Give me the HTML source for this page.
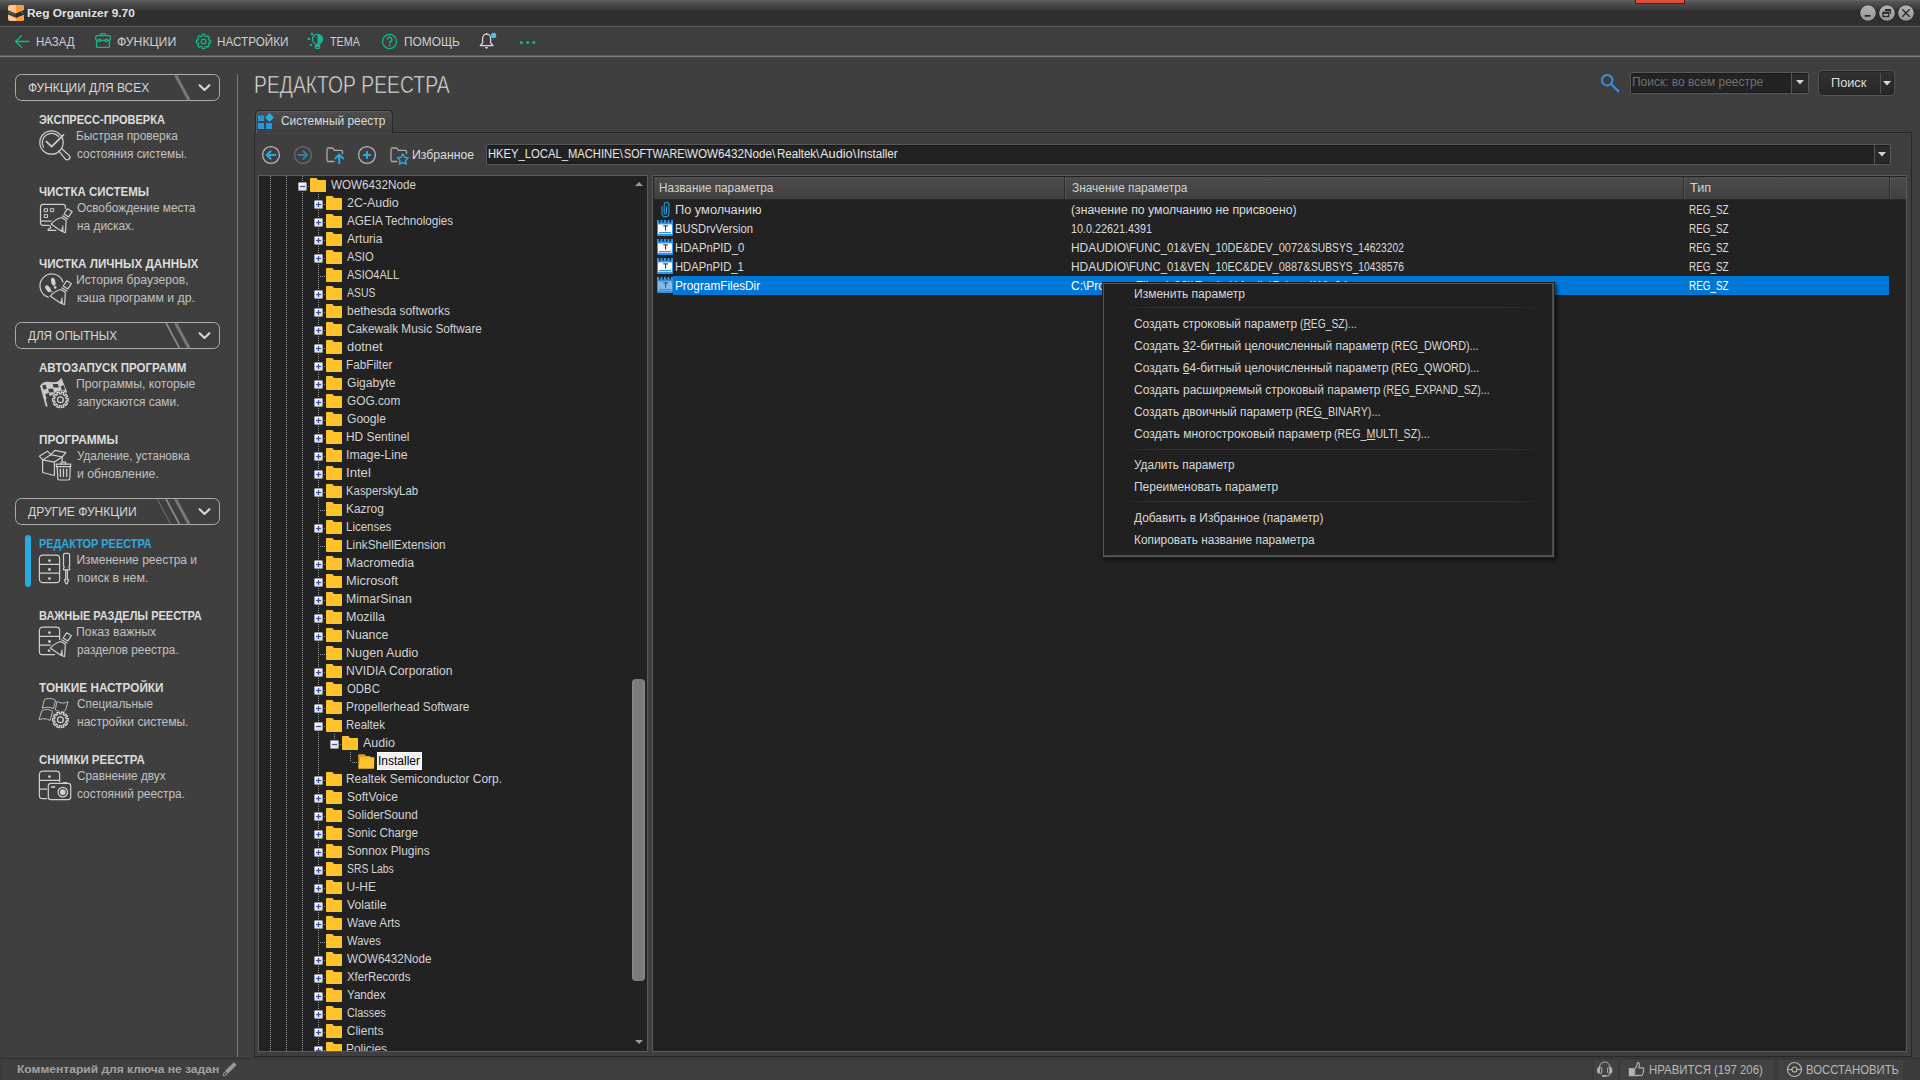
<!DOCTYPE html>
<html lang="ru"><head><meta charset="utf-8"><title>Reg Organizer 9.70</title>
<style>
html,body{margin:0;padding:0;background:#3f3f3f;}
body{width:1920px;height:1080px;overflow:hidden;font-family:"Liberation Sans",sans-serif;}
#app{position:relative;width:1920px;height:1080px;overflow:hidden;background:#3f3f3f;}
.t{position:absolute;white-space:nowrap;line-height:1;display:block;}
.t u{text-decoration:underline;text-underline-offset:1px;}
svg{position:absolute;overflow:visible;}
.vd{position:absolute;width:1px;background:repeating-linear-gradient(#9a9a9a 0,#9a9a9a 1px,transparent 1px,transparent 2px);}
.hd{position:absolute;height:1px;background:repeating-linear-gradient(90deg,#9a9a9a 0,#9a9a9a 1px,transparent 1px,transparent 2px);}
.s{display:inline-block;transform-origin:0 50%;white-space:nowrap;vertical-align:baseline;}

</style></head>
<body>
<div id="app">
<div style="position:absolute;left:0px;top:0px;width:1920px;height:26px;background:linear-gradient(#6a6a6a 0,#585858 1px,#4f4f4f 3px,#464646 6px,#3c3c3c 9px,#303030 10.5px,#303030 26px);"></div>
<div style="position:absolute;left:0px;top:26px;width:1920px;height:1px;background:#585858;"></div>
<div style="position:absolute;left:1635px;top:0px;width:50px;height:4px;background:#dc4f3f;box-sizing:border-box;border:1px solid #5a1a14;border-top:0;"></div>
<svg style="left:8px;top:5px" width="16" height="16" viewBox="0 0 16 16">
<rect x="0" y="0" width="16" height="16" rx="2.2" fill="#ffc590"/>
<path d="M8 0h5.8a2.2 2.2 0 0 1 2.2 2.2v11.6a2.2 2.2 0 0 1-2.2 2.2H8z" fill="#ff9a3c"/>
<path d="M0 5.2l8 3.2 8-3.2v4.2l-8 3.4-8-3.4z" fill="#3a3a3a"/>
<path d="M8 8.4l8-3.2v4.2l-8 3.4z" fill="#2b2b2b"/>
<rect x="1.2" y="6.9" width="1.5" height="1.3" fill="#19b38a"/><rect x="4" y="8" width="1.4" height="1.3" fill="#e74c3c"/>
<rect x="13.6" y="6.9" width="1.4" height="1.3" fill="#29abe2"/>
</svg>
<span class="t " style="left:26.97px;top:8px;font-size:11.5px;color:#e2e2e2;transform-origin:0 9px;transform:scaleX(1.0350);font-weight:700;">Reg Organizer 9.70</span>
<svg style="left:1859px;top:4px" width="18" height="18" viewBox="0 0 18 18"><defs><linearGradient id="wbmin" x1="0" y1="0" x2="0" y2="1"><stop offset="0" stop-color="#b4b4b4"/><stop offset="1" stop-color="#969696"/></linearGradient></defs><circle cx="9" cy="9" r="8.6" fill="#262626"/><circle cx="9" cy="9" r="7.8" fill="url(#wbmin)"/><rect x="5.5" y="11" width="6" height="1.7" fill="#2a2a2a"/></svg>
<svg style="left:1878px;top:4px" width="18" height="18" viewBox="0 0 18 18"><defs><linearGradient id="wbmax" x1="0" y1="0" x2="0" y2="1"><stop offset="0" stop-color="#b4b4b4"/><stop offset="1" stop-color="#969696"/></linearGradient></defs><circle cx="9" cy="9" r="8.6" fill="#262626"/><circle cx="9" cy="9" r="7.8" fill="url(#wbmax)"/><path d="M7 5.6h5.4v4.2M7 6.4h5.4" stroke="#2a2a2a" stroke-width="1.3" fill="none"/><rect x="5" y="8.3" width="5.6" height="4.2" fill="none" stroke="#2a2a2a" stroke-width="1.3"/><path d="M5 9h5.6" stroke="#2a2a2a" stroke-width="1.6"/></svg>
<svg style="left:1897px;top:4px" width="18" height="18" viewBox="0 0 18 18"><defs><linearGradient id="wbcls" x1="0" y1="0" x2="0" y2="1"><stop offset="0" stop-color="#b4b4b4"/><stop offset="1" stop-color="#969696"/></linearGradient></defs><circle cx="9" cy="9" r="8.6" fill="#262626"/><circle cx="9" cy="9" r="7.8" fill="url(#wbcls)"/><path d="M5.3 5.3l7.4 7.4M12.7 5.3l-7.4 7.4" stroke="#2a2a2a" stroke-width="1.4" fill="none"/></svg>
<div style="position:absolute;left:0px;top:27px;width:1920px;height:28px;background:#3e3e3e;"></div>
<div style="position:absolute;left:0px;top:55px;width:1920px;height:1px;background:#5c5c5c;"></div>
<div style="position:absolute;left:0px;top:56px;width:1920px;height:1px;background:#7d7d7d;"></div>
<div style="position:absolute;left:0px;top:57px;width:1920px;height:1px;background:#4a4a4a;"></div>
<svg style="left:14px;top:34px" width="16" height="15" viewBox="0 0 16 15"><path d="M15 7.5H1.6M7.6 1.6L1.6 7.5l6 5.9" fill="none" stroke="#19b58b" stroke-width="1.3" stroke-linecap="round" stroke-linejoin="round"/></svg>
<span class="t " style="left:35.61px;top:35px;font-size:13px;color:#cfcfcf;transform-origin:0 11px;transform:scaleX(0.8824);">НАЗАД</span>
<svg style="left:95px;top:33px" width="16" height="16" viewBox="0 0 16 16"><g fill="none" stroke="#19b58b" stroke-width="1.3" stroke-linejoin="round"><path d="M5.700 2.600V1.500a.9.9 0 0 1 .9-.9h3a.9.9 0 0 1 .9.900v1.100"/><path d="M2.900 7.400H2A1.300 1.300 0 0 1 .7 6.100V3.900A1.300 1.300 0 0 1 2 2.600h12.100a1.300 1.300 0 0 1 1.300 1.300v2.200a1.300 1.300 0 0 1-1.300 1.300H13"/><path d="M1.600 7.400v5.800a1.200 1.200 0 0 0 1.200 1.200h10.500a1.200 1.200 0 0 0 1.200-1.200V7.400"/><circle cx="4.400" cy="7.400" r="1.200"/><circle cx="11.500" cy="7.400" r="1.200"/><path d="M5.600 7.400h4.700"/></g></svg>
<span class="t " style="left:116.51px;top:35px;font-size:13px;color:#cfcfcf;transform-origin:0 11px;transform:scaleX(0.9426);">ФУНКЦИИ</span>
<svg style="left:195px;top:33px" width="17" height="17" viewBox="0 0 17 17"><path d="M15.58 7.20L15.58 9.80L13.84 9.83L13.21 11.33L14.43 12.59L12.59 14.43L11.33 13.21L9.83 13.84L9.80 15.58L7.20 15.58L7.17 13.84L5.67 13.21L4.41 14.43L2.57 12.59L3.79 11.33L3.16 9.83L1.42 9.80L1.42 7.20L3.16 7.17L3.79 5.67L2.57 4.41L4.41 2.57L5.67 3.79L7.17 3.16L7.20 1.42L9.80 1.42L9.83 3.16L11.33 3.79L12.59 2.57L14.43 4.41L13.21 5.67L13.84 7.17Z" fill="none" stroke="#19b58b" stroke-width="1.2" stroke-linejoin="round"/><circle cx="8.5" cy="8.5" r="2.3" fill="none" stroke="#19b58b" stroke-width="1.2"/></svg>
<span class="t " style="left:217.01px;top:35px;font-size:13px;color:#cfcfcf;transform-origin:0 11px;transform:scaleX(0.8984);">НАСТРОЙКИ</span>
<svg style="left:307px;top:32px" width="18" height="18" viewBox="0 0 18 18"><circle cx="10.450" cy="7.300" r="5" fill="none" stroke="#19b58b" stroke-width="1.300"/><path d="M10.450 2.300a5 5 0 0 1 0 10z" fill="#19b58b"/><path d="M7.900 12.200h5.200v3.300a1.500 1.500 0 0 1-1.500 1.500H9.400a1.500 1.500 0 0 1-1.500-1.500z" fill="#19b58b"/><ellipse cx="10.500" cy="15.500" rx="1.500" ry=".55" fill="#3e3e3e"/><rect x="3.900" y=".8" width="2.200" height="2.200" rx=".4" fill="#19b58b"/><rect x=".8" y="5.850" width="2.200" height="2.200" rx=".4" fill="#19b58b"/><rect x="2.850" y="11.900" width="2.200" height="2.200" rx=".4" fill="#19b58b"/></svg>
<span class="t " style="left:330.39px;top:35px;font-size:13px;color:#cfcfcf;transform-origin:0 11px;transform:scaleX(0.8278);">ТЕМА</span>
<svg style="left:381px;top:33px" width="17" height="17" viewBox="0 0 17 17"><circle cx="8.500" cy="8.500" r="7.050" fill="none" stroke="#19b58b" stroke-width="1.300"/><path d="M6.300 6.600a2.300 2.300 0 1 1 3.500 1.900c-.8.500-1.200.9-1.200 1.900" fill="none" stroke="#19b58b" stroke-width="1.650"/><circle cx="8.600" cy="12.500" r=".9" fill="#19b58b"/></svg>
<span class="t " style="left:403.50px;top:35px;font-size:13px;color:#cfcfcf;transform-origin:0 11px;transform:scaleX(0.9143);">ПОМОЩЬ</span>
<svg style="left:479px;top:32px" width="18" height="18" viewBox="0 0 18 18"><path d="M1.200 13.600L3.600 11V6.400a4 4.300 0 0 1 8 0V11l2.400 2.600z" fill="none" stroke="#dadada" stroke-width="1.250" stroke-linejoin="round"/><path d="M7.600 2.100V.9" stroke="#dadada" stroke-width="1.200"/><path d="M5.900 15h3.200l-1.600 2.200z" fill="#dadada"/><circle cx="14.600" cy="3.500" r="2.650" fill="#40c4fc"/></svg>
<svg style="left:519px;top:40px" width="18" height="5" viewBox="0 0 18 5"><circle cx="2.400" cy="2.400" r="1.500" fill="#19b58b"/><circle cx="8.600" cy="2.400" r="1.500" fill="#19b58b"/><circle cx="14.800" cy="2.400" r="1.500" fill="#19b58b"/></svg>
<div style="position:absolute;left:0px;top:1057px;width:1920px;height:23px;background:#3b3b3b;"></div>
<div style="position:absolute;left:0px;top:1058px;width:1920px;height:1px;background:#343434;"></div>
<div style="position:absolute;left:2px;top:1060px;width:1590px;height:20px;background:#3f3f3f;"></div>
<span class="t " style="left:16.87px;top:1064px;font-size:11.5px;color:#a2a2a2;transform-origin:0 9px;transform:scaleX(1.0467);font-weight:700;">Комментарий для ключа не задан</span>
<svg style="left:222px;top:1061px" width="16" height="16" viewBox="0 0 16 16"><path d="M11.800 1.200l2.800 2.800-8.800 8.800-2.800-2.800z" fill="#9a9a9a"/><path d="M2.300 10.900l2.700 2.700-3.900 1.300z" fill="none" stroke="#9a9a9a" stroke-width="1"/></svg>
<div style="position:absolute;left:1594px;top:1060px;width:24px;height:20px;background:#424242;"></div>
<svg style="left:1597px;top:1061px" width="17" height="17" viewBox="0 0 17 17"><path d="M2.300 7V6.700a5.400 5.700 0 0 1 10.800 0V7" fill="none" stroke="#b4b4b4" stroke-width="1"/><path d="M2.400 5.900C.9 6.100 0 7.500 0 9.400s.9 3.300 2.400 3.500z" fill="#b4b4b4"/><ellipse cx="3.700" cy="9.400" rx="1.200" ry="3.500" fill="none" stroke="#b4b4b4" stroke-width="1"/><path d="M13 5.900c1.500.2 2.400 1.600 2.400 3.500s-.9 3.300-2.400 3.500z" fill="#b4b4b4"/><ellipse cx="11.700" cy="9.400" rx="1.200" ry="3.500" fill="none" stroke="#b4b4b4" stroke-width="1"/><path d="M13.200 12.600c0 1.700-1.400 2.400-3.500 2.400" fill="none" stroke="#b4b4b4" stroke-width="1"/><rect x="4.900" y="14" width="4.900" height="1.800" rx=".9" fill="#b4b4b4"/></svg>
<div style="position:absolute;left:1621px;top:1060px;width:153px;height:20px;background:#424242;"></div>
<svg style="left:1628px;top:1061px" width="17" height="16" viewBox="0 0 17 16"><rect x=".750" y="7.100" width="5.200" height="8.100" fill="#b4b4b4"/><path d="M6.700 14.600V7.900c1.700-1.200 2.400-3.100 2.600-5.700.1-1 1.700-.8 2 .7.200 1.200-.1 2.600-.5 3.900h3.700c1.200 0 1.500 1.200 1 2 .5.700.3 1.500-.3 2 .3.700 0 1.400-.5 1.800.1.900-.5 1.800-1.500 1.800z" fill="none" stroke="#b4b4b4" stroke-width="1.150" stroke-linejoin="round"/></svg>
<span class="t " style="left:1649.32px;top:1063px;font-size:13px;color:#b9b9b9;transform-origin:0 11px;transform:scaleX(0.8766);">НРАВИТСЯ (197 206)</span>
<div style="position:absolute;left:1778px;top:1060px;width:125px;height:20px;background:#424242;"></div>
<svg style="left:1786px;top:1061px" width="17" height="17" viewBox="0 0 17 17"><circle cx="8.500" cy="8.500" r="7" fill="none" stroke="#b4b4b4" stroke-width="1.200"/><circle cx="8.500" cy="8.500" r="2.500" fill="none" stroke="#b4b4b4" stroke-width="1.200"/><path d="M1.500 8.500H6M11 8.500h4.500" stroke="#b4b4b4" stroke-width="1.200"/></svg>
<span class="t " style="left:1805.82px;top:1063px;font-size:13px;color:#b9b9b9;transform-origin:0 11px;transform:scaleX(0.8703);">ВОССТАНОВИТЬ</span>
<div style="position:absolute;left:237px;top:74px;width:1px;height:983px;background:#7a7a7a;"></div>
<div style="position:absolute;left:15px;top:74px;width:205px;height:27px;box-sizing:border-box;border:1px solid #adadad;border-radius:6.5px;"></div>
<span class="t " style="left:27.61px;top:82px;font-size:12.5px;color:#d8d8d8;transform-origin:0 10px;transform:scaleX(0.9562);">ФУНКЦИИ ДЛЯ ВСЕХ</span>
<svg style="left:15px;top:74px" width="205" height="27" viewBox="0 0 205 27"><path d="M160.6 1L173.9 26" stroke="#787878" stroke-width="3"/><path d="M184.600 11.200l4.900 4.800 4.900-4.800" fill="none" stroke="#d6d6d6" stroke-width="2.100" stroke-linecap="round" stroke-linejoin="round"/></svg>
<div style="position:absolute;left:15px;top:322px;width:205px;height:27px;box-sizing:border-box;border:1px solid #adadad;border-radius:6.5px;"></div>
<span class="t " style="left:28.00px;top:330px;font-size:12.5px;color:#d8d8d8;transform-origin:0 10px;transform:scaleX(0.9361);">ДЛЯ ОПЫТНЫХ</span>
<svg style="left:15px;top:322px" width="205" height="27" viewBox="0 0 205 27"><path d="M160.6 1L173.9 26" stroke="#787878" stroke-width="3"/><path d="M151.05 1L164.35 26" stroke="#8a8a8a" stroke-width="1.7"/><path d="M184.600 11.200l4.900 4.800 4.900-4.800" fill="none" stroke="#d6d6d6" stroke-width="2.100" stroke-linecap="round" stroke-linejoin="round"/></svg>
<div style="position:absolute;left:15px;top:498px;width:205px;height:27px;box-sizing:border-box;border:1px solid #adadad;border-radius:6.5px;"></div>
<span class="t " style="left:28.00px;top:506px;font-size:12.5px;color:#d8d8d8;transform-origin:0 10px;transform:scaleX(0.9659);">ДРУГИЕ ФУНКЦИИ</span>
<svg style="left:15px;top:498px" width="205" height="27" viewBox="0 0 205 27"><path d="M160.6 1L173.9 26" stroke="#787878" stroke-width="3"/><path d="M151.05 1L164.35 26" stroke="#8a8a8a" stroke-width="1.7"/><path d="M142.3 1L155.6 26" stroke="#757575" stroke-width="1"/><path d="M184.600 11.200l4.900 4.800 4.900-4.800" fill="none" stroke="#d6d6d6" stroke-width="2.100" stroke-linecap="round" stroke-linejoin="round"/></svg>
<span class="t " style="left:38.88px;top:114px;font-size:12.2px;color:#dcdcdc;transform-origin:0 10px;transform:scaleX(0.9061);font-weight:700;font-weight:700;">ЭКСПРЕСС-ПРОВЕРКА</span><span class="t " style="left:76.46px;top:130px;font-size:12px;color:#c2c2c2;transform-origin:0 10px;transform:scaleX(0.9902);">Быстрая проверка</span><span class="t " style="left:76.73px;top:148px;font-size:12px;color:#c2c2c2;transform-origin:0 10px;transform:scaleX(0.9864);">состояния системы.</span>
<svg style="left:38px;top:128px" width="36" height="36" viewBox="0 0 36 36" fill="none" stroke="#cfcfcf" stroke-width="1.200" stroke-linejoin="round" stroke-linecap="round"><circle cx="13.500" cy="14.500" r="11.700"/><path d="M5.500 19.200A9.300 9.300 0 0 1 20.600 8.500"/><path d="M8.500 13.600l5.100 5.100L25.500 6.800" stroke-width="1.700"/><path d="M23.300 20.300L31.300 27.600a2.600 2.600 0 0 1-4.100 3.200L20.700 22.900"/></svg>
<span class="t " style="left:38.74px;top:186px;font-size:12.2px;color:#dcdcdc;transform-origin:0 10px;transform:scaleX(0.9437);font-weight:700;font-weight:700;">ЧИСТКА СИСТЕМЫ</span><span class="t " style="left:76.73px;top:202px;font-size:12px;color:#c2c2c2;transform-origin:0 10px;transform:scaleX(0.9895);">Освобождение места</span><span class="t " style="left:76.59px;top:220px;font-size:12px;color:#c2c2c2;transform-origin:0 10px;transform:scaleX(0.9911);">на дисках.</span>
<svg style="left:38px;top:200px" width="36" height="36" viewBox="0 0 36 36" fill="none" stroke="#cfcfcf" stroke-width="1.200" stroke-linejoin="round" stroke-linecap="round"><path d="M12 25.300H5a2.500 2.500 0 0 1-2.500-2.500V6.800A2.500 2.500 0 0 1 5 4.300h19.900a2.500 2.500 0 0 1 2.500 2.500V9"/><path d="M2.500 21.200h11"/><path d="M12.200 25.300l.5 2.900-2.400.8-.2 1.300h7.800"/><g stroke-width="1"><rect x="6.600" y="8.700" width="2.900" height="2.900"/><rect x="12.700" y="8.700" width="2.900" height="2.900"/><rect x="6.600" y="14.600" width="2.900" height="2.900"/></g><g transform="translate(0 0)"><path d="M23.500 17.500C19.500 18.400 15.600 21.200 13.100 24.100L22.700 30.800 27.400 32.700 28.200 20.300z" fill="#3f3f3f" stroke="#3f3f3f" stroke-width="3.400"/><path d="M29.400 8.800L34.100 11.600 30.600 16.900 26 14z" fill="#3f3f3f" stroke="#3f3f3f" stroke-width="3"/><path d="M23.500 17.500C19.500 18.400 15.600 21.200 13.100 24.100L22.700 30.800 27.400 32.700 28.200 20.300z"/><path d="M29.400 8.800L34.100 11.600 30.600 16.900 26 14z"/><path d="M24.500 15.800L29.700 18.900"/><path d="M24.800 25.800L23.200 30.900 25.200 31.600z" fill="#cfcfcf" stroke-width=".5"/></g></svg>
<span class="t " style="left:38.74px;top:258px;font-size:12.2px;color:#dcdcdc;transform-origin:0 10px;transform:scaleX(0.9593);font-weight:700;font-weight:700;">ЧИСТКА ЛИЧНЫХ ДАННЫХ</span><span class="t " style="left:76.44px;top:274px;font-size:12px;color:#c2c2c2;transform-origin:0 10px;transform:scaleX(1.0138);">История браузеров,</span><span class="t " style="left:76.58px;top:292px;font-size:12px;color:#c2c2c2;transform-origin:0 10px;transform:scaleX(1.0198);">кэша программ и др.</span>
<svg style="left:38px;top:272px" width="36" height="36" viewBox="0 0 36 36" fill="none" stroke="#cfcfcf" stroke-width="1.200" stroke-linejoin="round" stroke-linecap="round"><path d="M25 10A11.800 11.800 0 1 0 10.500 25.100"/><ellipse cx="15.300" cy="9.700" rx="2.100" ry="4" transform="rotate(-14 15.300 9.700)" fill="#cfcfcf" stroke="none"/><circle cx="17.200" cy="15.400" r="1.300" fill="#cfcfcf" stroke="none"/><ellipse cx="10.100" cy="16.700" rx="2.100" ry="3.900" transform="rotate(-36 10.100 16.700)" fill="#cfcfcf" stroke="none"/><circle cx="14.100" cy="20.200" r="1.100" fill="#cfcfcf" stroke="none"/><g transform="translate(-0.8 0)"><path d="M23.500 17.500C19.500 18.400 15.600 21.200 13.100 24.100L22.700 30.800 27.400 32.700 28.200 20.300z" fill="#3f3f3f" stroke="#3f3f3f" stroke-width="3.400"/><path d="M29.400 8.800L34.100 11.600 30.600 16.900 26 14z" fill="#3f3f3f" stroke="#3f3f3f" stroke-width="3"/><path d="M23.500 17.500C19.500 18.400 15.600 21.200 13.100 24.100L22.700 30.800 27.400 32.700 28.200 20.300z"/><path d="M29.400 8.800L34.100 11.600 30.600 16.900 26 14z"/><path d="M24.500 15.800L29.700 18.900"/><path d="M24.800 25.800L23.200 30.900 25.200 31.600z" fill="#cfcfcf" stroke-width=".5"/></g></svg>
<span class="t " style="left:38.87px;top:362px;font-size:12.2px;color:#dcdcdc;transform-origin:0 10px;transform:scaleX(0.9495);font-weight:700;font-weight:700;">АВТОЗАПУСК ПРОГРАММ</span><span class="t " style="left:76.44px;top:378px;font-size:12px;color:#c2c2c2;transform-origin:0 10px;transform:scaleX(1.0172);">Программы, которые</span><span class="t " style="left:76.86px;top:396px;font-size:12px;color:#c2c2c2;transform-origin:0 10px;transform:scaleX(0.9878);">запускаются сами.</span>
<svg style="left:38px;top:376px" width="36" height="36" viewBox="0 0 36 36" fill="none" stroke="#cfcfcf" stroke-width="1.200" stroke-linejoin="round" stroke-linecap="round"><path d="M2 9.700C3.500 8 5 6.500 6.800 6c3.700-.8 7.400.6 11.100 0 2.200-.5 4-2.200 5.600-4.300L29 16c-1.200 1.600-2.600 2.400-4.200 2.800-3.600.800-7.200-.6-10.800.2-2.400.600-4.600 2.200-6.300 4.400l2 6.800-1.800.6z" fill="#c9c9c9" stroke="none"/><path d="M4.200 9.400l3.400-1 1.300 4.300-3.400 1.100z" fill="#3f3f3f" stroke="none"/><path d="M14.600 7.900h5.300l1 3.700h-5.200z" fill="#3f3f3f" stroke="none"/><path d="M10.100 12.900l4.700-.3 1.200 3.700-4.700.2z" fill="#3f3f3f" stroke="none"/><path d="M22.700 10.400l3-1.400 1.400 4.500-3 1.300z" fill="#3f3f3f" stroke="none"/><path d="M7.200 18.200l3.600-1.500 1.100 3.900-3.500 1.700z" fill="#3f3f3f" stroke="none"/><circle cx="22.4" cy="23.8" r="9" fill="#3f3f3f" stroke="none"/><path d="M30.18 22.44L30.18 25.16L28.21 24.81L27.70 26.40L29.49 27.28L27.90 29.47L26.51 28.04L25.16 29.01L26.10 30.78L23.51 31.62L23.23 29.64L21.57 29.64L21.29 31.62L18.70 30.78L19.64 29.01L18.29 28.04L16.90 29.47L15.31 27.28L17.10 26.40L16.59 24.81L14.62 25.16L14.62 22.44L16.59 22.79L17.10 21.20L15.31 20.32L16.90 18.13L18.29 19.56L19.64 18.59L18.70 16.82L21.29 15.98L21.57 17.96L23.23 17.96L23.51 15.98L26.10 16.82L25.16 18.59L26.51 19.56L27.90 18.13L29.49 20.32L27.70 21.20L28.21 22.79Z" stroke-width="1.300"/><circle cx="22.4" cy="23.8" r="2.900" stroke-width="1.300"/></svg>
<span class="t " style="left:38.60px;top:434px;font-size:12.2px;color:#dcdcdc;transform-origin:0 10px;transform:scaleX(0.9743);font-weight:700;font-weight:700;">ПРОГРАММЫ</span><span class="t " style="left:76.87px;top:450px;font-size:12px;color:#c2c2c2;transform-origin:0 10px;transform:scaleX(0.9677);">Удаление, установка</span><span class="t " style="left:76.58px;top:468px;font-size:12px;color:#c2c2c2;transform-origin:0 10px;transform:scaleX(1.0224);">и обновление.</span>
<svg style="left:38px;top:448px" width="36" height="36" viewBox="0 0 36 36" fill="none" stroke="#cfcfcf" stroke-width="1.200" stroke-linejoin="round" stroke-linecap="round"><path d="M4.600 11.900V24.500L16.400 27.500V14.100z"/><path d="M4.600 11.900L12.700 6.700 24.200 9 16.400 14.100"/><path d="M4.600 11.900L1.300 8.200 9.400 3.200 12.700 6.700"/><path d="M12.700 6.700L16.800 2.300 27.900 4.700 24.200 9"/><path d="M24.200 9v4.300"/><path d="M19.200 18.600l.6 11.700a1.700 1.700 0 0 0 1.700 1.700h8.600a1.700 1.700 0 0 0 1.700-1.700l.5-11.700" fill="#3f3f3f"/><rect x="18.300" y="16.200" width="14.400" height="2.400" fill="#3f3f3f"/><path d="M23.100 16.200v-2.100h4.500v2.100"/><path d="M22.400 21.200v7.400M25.500 21.200v7.400M28.700 21.200v7.400" stroke-width="1.300"/></svg>
<span class="t " style="left:38.63px;top:538px;font-size:12.2px;color:#29abe2;transform-origin:0 10px;transform:scaleX(0.8954);font-weight:700;font-weight:700;">РЕДАКТОР РЕЕСТРА</span><span class="t " style="left:76.45px;top:554px;font-size:12px;color:#c2c2c2;transform-origin:0 10px;transform:scaleX(1.0000);">Изменение реестра и</span><span class="t " style="left:76.57px;top:572px;font-size:12px;color:#c2c2c2;transform-origin:0 10px;transform:scaleX(1.0335);">поиск в нем.</span>
<svg style="left:38px;top:552px" width="36" height="36" viewBox="0 0 36 36" fill="none" stroke="#cfcfcf" stroke-width="1.200" stroke-linejoin="round" stroke-linecap="round"><rect x="1.400" y="3.200" width="20.200" height="27.400" rx="3.200"/><path d="M1.400 12.300h20.200M1.400 21.200h20.200"/><circle cx="11.400" cy="8.600" r="1.400" fill="#cfcfcf" stroke="none"/><circle cx="11.400" cy="17.500" r="1.400" fill="#cfcfcf" stroke="none"/><circle cx="11.400" cy="26.600" r="1.400" fill="#cfcfcf" stroke="none"/><path d="M25.500 13.900V3a1.600 1.600 0 0 1 1.600-1.600h2.900A1.600 1.600 0 0 1 31.600 3V13.900c-.9.200-.9 1.900 0 2.100v1.900h-6.100V16c.9-.2.900-1.900 0-2.100z"/><path d="M27.700 17.900v9.600M29.400 17.900v9.600"/><path d="M27.700 27.500l-1.300.3 1.400 3.600c.3.500 1.200.5 1.500 0l1.300-3.600-1.200-.3"/></svg>
<div style="position:absolute;left:25px;top:535px;width:6px;height:52px;background:#29abe2;border-radius:3px;"></div>
<span class="t " style="left:38.63px;top:610px;font-size:12.2px;color:#dcdcdc;transform-origin:0 10px;transform:scaleX(0.9013);font-weight:700;font-weight:700;">ВАЖНЫЕ РАЗДЕЛЫ РЕЕСТРА</span><span class="t " style="left:76.44px;top:626px;font-size:12px;color:#c2c2c2;transform-origin:0 10px;transform:scaleX(1.0227);">Показ важных</span><span class="t " style="left:76.59px;top:644px;font-size:12px;color:#c2c2c2;transform-origin:0 10px;transform:scaleX(0.9828);">разделов реестра.</span>
<svg style="left:38px;top:624px" width="36" height="36" viewBox="0 0 36 36" fill="none" stroke="#cfcfcf" stroke-width="1.200" stroke-linejoin="round" stroke-linecap="round"><path d="M16.400 30.600H4.600a3.200 3.200 0 0 1-3.200-3.200V6.400a3.200 3.200 0 0 1 3.200-3.200h13.800a3.200 3.200 0 0 1 3.200 3.200V15.600"/><path d="M1.400 12.300h20.200M1.400 21.200h11.300"/><circle cx="11.400" cy="8.600" r="1.400" fill="#cfcfcf" stroke="none"/><circle cx="11.400" cy="17.500" r="1.400" fill="#cfcfcf" stroke="none"/><circle cx="11.100" cy="26.600" r="1.400" fill="#cfcfcf" stroke="none"/><g transform="translate(-0.8 0)"><path d="M23.500 17.500C19.500 18.400 15.600 21.200 13.100 24.100L22.700 30.800 27.400 32.700 28.200 20.300z" fill="#3f3f3f" stroke="#3f3f3f" stroke-width="3.400"/><path d="M29.400 8.800L34.100 11.600 30.600 16.900 26 14z" fill="#3f3f3f" stroke="#3f3f3f" stroke-width="3"/><path d="M23.500 17.500C19.500 18.400 15.600 21.200 13.100 24.100L22.700 30.800 27.400 32.700 28.200 20.300z"/><path d="M29.400 8.800L34.100 11.600 30.600 16.900 26 14z"/><path d="M24.500 15.800L29.700 18.900"/><path d="M24.800 25.800L23.200 30.900 25.200 31.600z" fill="#cfcfcf" stroke-width=".5"/></g></svg>
<span class="t " style="left:39.00px;top:682px;font-size:12.2px;color:#dcdcdc;transform-origin:0 10px;transform:scaleX(0.9669);font-weight:700;font-weight:700;">ТОНКИЕ НАСТРОЙКИ</span><span class="t " style="left:76.73px;top:698px;font-size:12px;color:#c2c2c2;transform-origin:0 10px;transform:scaleX(0.9836);">Специальные</span><span class="t " style="left:76.59px;top:716px;font-size:12px;color:#c2c2c2;transform-origin:0 10px;transform:scaleX(1.0041);">настройки системы.</span>
<svg style="left:38px;top:696px" width="36" height="36" viewBox="0 0 36 36" fill="none" stroke="#cfcfcf" stroke-width="1.200" stroke-linejoin="round" stroke-linecap="round"><g stroke="#bdbdbd" stroke-width="1"><path d="M6.800 3.400C9 2 14 2 17.600 4.300L15.300 12.700C12 10.800 8 10.800 4.600 12.100z"/><path d="M19.400 5.400C22.500 7.600 26.500 7.600 30.100 5.600L27.600 14C26.800 15.800 21 16.300 17.600 14.100z"/><path d="M4.200 14.500C7 13 11.500 13 14.600 15.300L12 24.500C9 22.400 5 22.300 1.400 23.400z"/></g><circle cx="22.4" cy="23.8" r="9" fill="#3f3f3f" stroke="none"/><path d="M30.18 22.44L30.18 25.16L28.21 24.81L27.70 26.40L29.49 27.28L27.90 29.47L26.51 28.04L25.16 29.01L26.10 30.78L23.51 31.62L23.23 29.64L21.57 29.64L21.29 31.62L18.70 30.78L19.64 29.01L18.29 28.04L16.90 29.47L15.31 27.28L17.10 26.40L16.59 24.81L14.62 25.16L14.62 22.44L16.59 22.79L17.10 21.20L15.31 20.32L16.90 18.13L18.29 19.56L19.64 18.59L18.70 16.82L21.29 15.98L21.57 17.96L23.23 17.96L23.51 15.98L26.10 16.82L25.16 18.59L26.51 19.56L27.90 18.13L29.49 20.32L27.70 21.20L28.21 22.79Z" stroke-width="1.300"/><circle cx="22.4" cy="23.8" r="2.900" stroke-width="1.300"/></svg>
<span class="t " style="left:38.74px;top:754px;font-size:12.2px;color:#dcdcdc;transform-origin:0 10px;transform:scaleX(0.9417);font-weight:700;font-weight:700;">СНИМКИ РЕЕСТРА</span><span class="t " style="left:76.73px;top:770px;font-size:12px;color:#c2c2c2;transform-origin:0 10px;transform:scaleX(0.9832);">Сравнение двух</span><span class="t " style="left:76.73px;top:788px;font-size:12px;color:#c2c2c2;transform-origin:0 10px;transform:scaleX(0.9911);">состояний реестра.</span>
<svg style="left:38px;top:768px" width="36" height="36" viewBox="0 0 36 36" fill="none" stroke="#cfcfcf" stroke-width="1.200" stroke-linejoin="round" stroke-linecap="round"><path d="M8.700 30.600H4.600a3.200 3.200 0 0 1-3.200-3.200V6.400a3.200 3.200 0 0 1 3.200-3.200h13.800a3.200 3.200 0 0 1 3.200 3.200V13.400"/><path d="M1.400 12.300h20.200M1.400 21.200h7.300"/><circle cx="11.400" cy="8.600" r="1.400" fill="#cfcfcf" stroke="none"/><rect x="10.300" y="15.400" width="22.400" height="16.300" rx="2.600"/><rect x="25.100" y="14" width="3.900" height="1.200" fill="#cfcfcf" stroke="none"/><rect x="13.100" y="18.200" width="4.100" height="1.600" fill="#cfcfcf" stroke="none"/><circle cx="24.800" cy="24.100" r="4.800"/><circle cx="24.800" cy="24.100" r="2.900" fill="#cfcfcf" stroke="none"/></svg>
<span class="t " style="left:253.79px;top:74px;font-size:23px;color:#e8e8e8;transform-origin:0 19px;transform:scale(0.8407,1.0000);-webkit-text-stroke:0.65px #3f3f3f;">РЕДАКТОР РЕЕСТРА</span>
<svg style="left:1600px;top:73px" width="20" height="20" viewBox="0 0 20 20"><circle cx="7.200" cy="7.200" r="5.200" fill="none" stroke="#3d8fdb" stroke-width="2"/><path d="M11 11l7.300 7.300" stroke="#3d8fdb" stroke-width="2.200" stroke-linecap="round"/></svg>
<div style="position:absolute;left:1630px;top:72px;width:179px;height:22px;box-sizing:border-box;border:1px solid #5a5a5a;border-radius:2px;background:#232323;box-shadow:inset 0 0 0 1px #1a1a1a;"></div>
<div style="position:absolute;left:1791px;top:73px;width:1px;height:20px;background:#555;"></div>
<div style="position:absolute;left:1792px;top:74px;width:16px;height:18px;background:#2a2a2a;"></div>
<svg style="left:1796px;top:80px" width="8" height="5" viewBox="0 0 8 5"><path d="M0 0h8L4 4.500z" fill="#cfcfcf"/></svg>
<span class="t " style="left:1632.07px;top:76px;font-size:12.5px;color:#717171;transform-origin:0 10px;transform:scaleX(0.9579);">Поиск: во всем реестре</span>
<div style="position:absolute;left:1818px;top:70px;width:77px;height:26px;box-sizing:border-box;border:1px solid #555;border-radius:5px;background:linear-gradient(#333,#262626);box-shadow:inset 0 0 0 1px #222;"></div>
<div style="position:absolute;left:1880px;top:73px;width:1px;height:21px;background:#505050;"></div>
<span class="t " style="left:1831.06px;top:76px;font-size:13px;color:#dedede;transform-origin:0 11px;transform:scaleX(0.9800);">Поиск</span>
<svg style="left:1883px;top:81px" width="8" height="5" viewBox="0 0 8 5"><path d="M0 0h8L4 4.500z" fill="#d8d8d8"/></svg>
<div style="position:absolute;left:254px;top:132px;width:1658px;height:925px;box-sizing:border-box;border:1px solid #272727;background:#3f3f3f;box-shadow:inset 0 1px 0 #444;"></div>
<div style="position:absolute;left:255px;top:110px;width:138px;height:23px;box-sizing:border-box;border:1px solid #272727;border-bottom:0;border-radius:5px 5px 0 0;background:linear-gradient(#505050,#444 45%,#3f3f3f);box-shadow:inset 1px 1px 0 #5e5e5e;"></div>
<svg style="left:258px;top:113px" width="16" height="16" viewBox="0 0 16 16"><rect x="0" y="2.500" width="6" height="5.500" fill="#1e9be0"/><rect x="0" y="10" width="6" height="6" fill="#1e9be0"/><rect x="8" y="10" width="6" height="6" fill="#1e9be0"/><path d="M11.500 0l4.500 4.500-4.500 4.500-4.500-4.500z" fill="#29abe2"/></svg>
<span class="t " style="left:281.13px;top:115px;font-size:12px;color:#dcdcdc;transform-origin:0 10px;transform:scaleX(0.9918);">Системный реестр</span>
<svg style="left:261px;top:145px;opacity:1" width="20" height="20" viewBox="0 0 20 20"><circle cx="10" cy="10" r="8.450" fill="none" stroke="#b8b8b8" stroke-width="1.300"/><path d="M14.400 10H6M9.600 6.200l-3.800 3.800 3.800 3.800" fill="none" stroke="#29abe2" stroke-width="2" stroke-linecap="round" stroke-linejoin="round"/></svg>
<svg style="left:293px;top:145px;opacity:0.6" width="20" height="20" viewBox="0 0 20 20"><circle cx="10" cy="10" r="8.450" fill="none" stroke="#8a8a8a" stroke-width="1.300"/><path d="M5.600 10h8.400M10.400 6.200l3.800 3.800-3.800 3.800" fill="none" stroke="#29abe2" stroke-width="2" stroke-linecap="round" stroke-linejoin="round"/></svg>
<svg style="left:325.600px;top:146.500px" width="20" height="19" viewBox="0 0 20 19"><path d="M8.500 14.500H2.300a1.300 1.300 0 0 1-1.300-1.300V2.300A1.300 1.300 0 0 1 2.300 1h4.200l2 2.300h6.700a1.300 1.300 0 0 1 1.300 1.300V7" fill="none" stroke="#ababab" stroke-width="1.300" stroke-linejoin="round"/><path d="M13.200 16.300V7.600M9.300 11.400l3.900-3.800 3.900 3.800" fill="none" stroke="#29abe2" stroke-width="2" stroke-linecap="round" stroke-linejoin="round"/></svg>
<svg style="left:357px;top:145px;opacity:1" width="20" height="20" viewBox="0 0 20 20"><circle cx="10" cy="10" r="8.450" fill="none" stroke="#b8b8b8" stroke-width="1.300"/><path d="M10 6.200v7.600M6.200 10h7.600" fill="none" stroke="#29abe2" stroke-width="2" stroke-linecap="butt"/></svg>
<svg style="left:389.700px;top:146.500px" width="21" height="20" viewBox="0 0 21 20"><path d="M7.500 14.500H2.300a1.300 1.300 0 0 1-1.300-1.300V2.300A1.300 1.300 0 0 1 2.300 1h4.200l2 2.300h6.700a1.300 1.300 0 0 1 1.300 1.300V7" fill="none" stroke="#ababab" stroke-width="1.300" stroke-linejoin="round"/><path d="M12.800 6.900l1.700 3.400 3.700.5-2.700 2.600.7 3.700-3.400-1.800-3.400 1.800.7-3.700-2.700-2.600 3.700-.5z" fill="#3f3f3f" stroke="#29abe2" stroke-width="1.400" stroke-linejoin="round"/></svg>
<span class="t " style="left:412.24px;top:149px;font-size:12px;color:#dcdcdc;transform-origin:0 10px;transform:scaleX(1.0202);">Избранное</span>
<div style="position:absolute;left:486px;top:144px;width:1405px;height:21px;box-sizing:border-box;border:1px solid #5a5a5a;border-radius:2px;background:#222;box-shadow:inset 0 0 0 1px #1a1a1a;"></div>
<div style="position:absolute;left:1874px;top:145px;width:1px;height:19px;background:#555;"></div>
<div style="position:absolute;left:1875px;top:146px;width:15px;height:17px;background:#2a2a2a;"></div>
<svg style="left:1878px;top:152px" width="8" height="5" viewBox="0 0 8 5"><path d="M0 0h8L4 4.500z" fill="#cfcfcf"/></svg>
<span class="t" style="left:488.19px;top:148px;font-size:12px;color:#e8e8e8;"><span class="s" style="width:135.47px;transform:scaleX(0.9357)">HKEY_LOCAL_MACHINE\</span><span class="s" style="width:63.75px;transform:scaleX(0.8940)">SOFTWARE\</span><span class="s" style="width:89.47px;transform:scaleX(0.9719)">WOW6432Node\</span><span class="s" style="width:42.73px;transform:scaleX(0.9605)">Realtek\</span><span class="s" style="width:37.47px;transform:scaleX(1.0647)">Audio\</span><span class="s" style="transform:scaleX(0.9669)">Installer</span></span>
<div style="position:absolute;left:258px;top:175px;width:390px;height:877px;box-sizing:border-box;border:1px solid #5b5b5b;background:#222;overflow:hidden;"><i class="vd" style="left:11px;top:0px;height:876px"></i>
<i class="vd" style="left:27px;top:0px;height:876px"></i>
<i class="vd" style="left:43px;top:0px;height:876px"></i>
<i class="vd" style="left:59px;top:18px;height:858px"></i>
<i class="vd" style="left:75px;top:558px;height:10px"></i>
<i class="vd" style="left:91px;top:576px;height:10px"></i>
<svg style="left:39px;top:6px" width="9" height="9" viewBox="0 0 9 9"><defs><linearGradient id="eg" x1="0" y1="0" x2="1" y2="1"><stop offset="0" stop-color="#fff"/><stop offset="1" stop-color="#d4d4d4"/></linearGradient></defs><rect x=".5" y=".5" width="8" height="8" rx=".8" fill="url(#eg)" stroke="#9c9c9c"/><path d="M2 4.500h5" stroke="#3a4ea8" stroke-width="1.200"/></svg>
<i class="hd" style="left:49px;top:10px;width:2px"></i>
<svg style="left:51px;top:2px" width="16" height="14" viewBox="0 0 16 14"><path d="M.8 0h5.100c.5 0 .8.200 1.100.600l.9 1.400h7.300c.5 0 .8.300.8.800v10.400c0 .5-.3.800-.8.800H.8c-.5 0-.8-.3-.8-.8V.8C0 .3.300 0 .8 0z" fill="#fec22b"/></svg>
<span class="t" style="left:72.00px;top:3px;font-size:12px;color:#d4d4d4;transform-origin:0 10px;transform:scaleX(0.9713)">WOW6432Node</span>
<svg style="left:55px;top:24px" width="9" height="9" viewBox="0 0 9 9"><defs><linearGradient id="eg" x1="0" y1="0" x2="1" y2="1"><stop offset="0" stop-color="#fff"/><stop offset="1" stop-color="#d4d4d4"/></linearGradient></defs><rect x=".5" y=".5" width="8" height="8" rx=".8" fill="url(#eg)" stroke="#9c9c9c"/><path d="M2 4.500h5" stroke="#3a4ea8" stroke-width="1.200"/><path d="M4.500 2v5" stroke="#3a4ea8" stroke-width="1.200"/></svg>
<i class="hd" style="left:65px;top:28px;width:2px"></i>
<svg style="left:67px;top:20px" width="16" height="14" viewBox="0 0 16 14"><path d="M.8 0h5.100c.5 0 .8.200 1.100.600l.9 1.400h7.300c.5 0 .8.300.8.800v10.400c0 .5-.3.800-.8.800H.8c-.5 0-.8-.3-.8-.8V.8C0 .3.300 0 .8 0z" fill="#fec22b"/></svg>
<span class="t" style="left:87.72px;top:21px;font-size:12px;color:#d4d4d4;transform-origin:0 10px;transform:scaleX(1.0347)">2C-Audio</span>
<svg style="left:55px;top:42px" width="9" height="9" viewBox="0 0 9 9"><defs><linearGradient id="eg" x1="0" y1="0" x2="1" y2="1"><stop offset="0" stop-color="#fff"/><stop offset="1" stop-color="#d4d4d4"/></linearGradient></defs><rect x=".5" y=".5" width="8" height="8" rx=".8" fill="url(#eg)" stroke="#9c9c9c"/><path d="M2 4.500h5" stroke="#3a4ea8" stroke-width="1.200"/><path d="M4.500 2v5" stroke="#3a4ea8" stroke-width="1.200"/></svg>
<i class="hd" style="left:65px;top:46px;width:2px"></i>
<svg style="left:67px;top:38px" width="16" height="14" viewBox="0 0 16 14"><path d="M.8 0h5.100c.5 0 .8.200 1.100.600l.9 1.400h7.300c.5 0 .8.300.8.800v10.400c0 .5-.3.800-.8.800H.8c-.5 0-.8-.3-.8-.8V.8C0 .3.300 0 .8 0z" fill="#fec22b"/></svg>
<span class="t" style="left:88.00px;top:39px;font-size:12px;color:#d4d4d4;transform-origin:0 10px;transform:scaleX(0.9725)">AGEIA Technologies</span>
<svg style="left:55px;top:60px" width="9" height="9" viewBox="0 0 9 9"><defs><linearGradient id="eg" x1="0" y1="0" x2="1" y2="1"><stop offset="0" stop-color="#fff"/><stop offset="1" stop-color="#d4d4d4"/></linearGradient></defs><rect x=".5" y=".5" width="8" height="8" rx=".8" fill="url(#eg)" stroke="#9c9c9c"/><path d="M2 4.500h5" stroke="#3a4ea8" stroke-width="1.200"/><path d="M4.500 2v5" stroke="#3a4ea8" stroke-width="1.200"/></svg>
<i class="hd" style="left:65px;top:64px;width:2px"></i>
<svg style="left:67px;top:56px" width="16" height="14" viewBox="0 0 16 14"><path d="M.8 0h5.100c.5 0 .8.200 1.100.600l.9 1.400h7.300c.5 0 .8.300.8.800v10.400c0 .5-.3.800-.8.800H.8c-.5 0-.8-.3-.8-.8V.8C0 .3.300 0 .8 0z" fill="#fec22b"/></svg>
<span class="t" style="left:88.00px;top:57px;font-size:12px;color:#d4d4d4;transform-origin:0 10px;transform:scaleX(1.0028)">Arturia</span>
<svg style="left:55px;top:78px" width="9" height="9" viewBox="0 0 9 9"><defs><linearGradient id="eg" x1="0" y1="0" x2="1" y2="1"><stop offset="0" stop-color="#fff"/><stop offset="1" stop-color="#d4d4d4"/></linearGradient></defs><rect x=".5" y=".5" width="8" height="8" rx=".8" fill="url(#eg)" stroke="#9c9c9c"/><path d="M2 4.500h5" stroke="#3a4ea8" stroke-width="1.200"/><path d="M4.500 2v5" stroke="#3a4ea8" stroke-width="1.200"/></svg>
<i class="hd" style="left:65px;top:82px;width:2px"></i>
<svg style="left:67px;top:74px" width="16" height="14" viewBox="0 0 16 14"><path d="M.8 0h5.100c.5 0 .8.200 1.100.600l.9 1.400h7.300c.5 0 .8.300.8.800v10.400c0 .5-.3.800-.8.800H.8c-.5 0-.8-.3-.8-.8V.8C0 .3.300 0 .8 0z" fill="#fec22b"/></svg>
<span class="t" style="left:88.00px;top:75px;font-size:12px;color:#d4d4d4;transform-origin:0 10px;transform:scaleX(0.9286)">ASIO</span>
<i class="hd" style="left:61px;top:100px;width:6px"></i>
<svg style="left:67px;top:92px" width="16" height="14" viewBox="0 0 16 14"><path d="M.8 0h5.100c.5 0 .8.200 1.100.600l.9 1.400h7.300c.5 0 .8.300.8.800v10.400c0 .5-.3.800-.8.800H.8c-.5 0-.8-.3-.8-.8V.8C0 .3.300 0 .8 0z" fill="#fec22b"/></svg>
<span class="t" style="left:88.00px;top:93px;font-size:12px;color:#d4d4d4;transform-origin:0 10px;transform:scaleX(0.9173)">ASIO4ALL</span>
<svg style="left:55px;top:114px" width="9" height="9" viewBox="0 0 9 9"><defs><linearGradient id="eg" x1="0" y1="0" x2="1" y2="1"><stop offset="0" stop-color="#fff"/><stop offset="1" stop-color="#d4d4d4"/></linearGradient></defs><rect x=".5" y=".5" width="8" height="8" rx=".8" fill="url(#eg)" stroke="#9c9c9c"/><path d="M2 4.500h5" stroke="#3a4ea8" stroke-width="1.200"/><path d="M4.500 2v5" stroke="#3a4ea8" stroke-width="1.200"/></svg>
<i class="hd" style="left:65px;top:118px;width:2px"></i>
<svg style="left:67px;top:110px" width="16" height="14" viewBox="0 0 16 14"><path d="M.8 0h5.100c.5 0 .8.200 1.100.600l.9 1.400h7.300c.5 0 .8.300.8.800v10.400c0 .5-.3.800-.8.800H.8c-.5 0-.8-.3-.8-.8V.8C0 .3.300 0 .8 0z" fill="#fec22b"/></svg>
<span class="t" style="left:88.00px;top:111px;font-size:12px;color:#d4d4d4;transform-origin:0 10px;transform:scaleX(0.8682)">ASUS</span>
<svg style="left:55px;top:132px" width="9" height="9" viewBox="0 0 9 9"><defs><linearGradient id="eg" x1="0" y1="0" x2="1" y2="1"><stop offset="0" stop-color="#fff"/><stop offset="1" stop-color="#d4d4d4"/></linearGradient></defs><rect x=".5" y=".5" width="8" height="8" rx=".8" fill="url(#eg)" stroke="#9c9c9c"/><path d="M2 4.500h5" stroke="#3a4ea8" stroke-width="1.200"/><path d="M4.500 2v5" stroke="#3a4ea8" stroke-width="1.200"/></svg>
<i class="hd" style="left:65px;top:136px;width:2px"></i>
<svg style="left:67px;top:128px" width="16" height="14" viewBox="0 0 16 14"><path d="M.8 0h5.100c.5 0 .8.200 1.100.600l.9 1.400h7.300c.5 0 .8.300.8.800v10.400c0 .5-.3.800-.8.800H.8c-.5 0-.8-.3-.8-.8V.8C0 .3.300 0 .8 0z" fill="#fec22b"/></svg>
<span class="t" style="left:87.59px;top:129px;font-size:12px;color:#d4d4d4;transform-origin:0 10px;transform:scaleX(0.9951)">bethesda softworks</span>
<svg style="left:55px;top:150px" width="9" height="9" viewBox="0 0 9 9"><defs><linearGradient id="eg" x1="0" y1="0" x2="1" y2="1"><stop offset="0" stop-color="#fff"/><stop offset="1" stop-color="#d4d4d4"/></linearGradient></defs><rect x=".5" y=".5" width="8" height="8" rx=".8" fill="url(#eg)" stroke="#9c9c9c"/><path d="M2 4.500h5" stroke="#3a4ea8" stroke-width="1.200"/><path d="M4.500 2v5" stroke="#3a4ea8" stroke-width="1.200"/></svg>
<i class="hd" style="left:65px;top:154px;width:2px"></i>
<svg style="left:67px;top:146px" width="16" height="14" viewBox="0 0 16 14"><path d="M.8 0h5.100c.5 0 .8.200 1.100.600l.9 1.400h7.300c.5 0 .8.300.8.800v10.400c0 .5-.3.800-.8.800H.8c-.5 0-.8-.3-.8-.8V.8C0 .3.300 0 .8 0z" fill="#fec22b"/></svg>
<span class="t" style="left:87.73px;top:147px;font-size:12px;color:#d4d4d4;transform-origin:0 10px;transform:scaleX(0.9817)">Cakewalk Music Software</span>
<svg style="left:55px;top:168px" width="9" height="9" viewBox="0 0 9 9"><defs><linearGradient id="eg" x1="0" y1="0" x2="1" y2="1"><stop offset="0" stop-color="#fff"/><stop offset="1" stop-color="#d4d4d4"/></linearGradient></defs><rect x=".5" y=".5" width="8" height="8" rx=".8" fill="url(#eg)" stroke="#9c9c9c"/><path d="M2 4.500h5" stroke="#3a4ea8" stroke-width="1.200"/><path d="M4.500 2v5" stroke="#3a4ea8" stroke-width="1.200"/></svg>
<i class="hd" style="left:65px;top:172px;width:2px"></i>
<svg style="left:67px;top:164px" width="16" height="14" viewBox="0 0 16 14"><path d="M.8 0h5.100c.5 0 .8.200 1.100.600l.9 1.400h7.300c.5 0 .8.300.8.800v10.400c0 .5-.3.800-.8.800H.8c-.5 0-.8-.3-.8-.8V.8C0 .3.300 0 .8 0z" fill="#fec22b"/></svg>
<span class="t" style="left:87.71px;top:165px;font-size:12px;color:#d4d4d4;transform-origin:0 10px;transform:scaleX(1.0687)">dotnet</span>
<svg style="left:55px;top:186px" width="9" height="9" viewBox="0 0 9 9"><defs><linearGradient id="eg" x1="0" y1="0" x2="1" y2="1"><stop offset="0" stop-color="#fff"/><stop offset="1" stop-color="#d4d4d4"/></linearGradient></defs><rect x=".5" y=".5" width="8" height="8" rx=".8" fill="url(#eg)" stroke="#9c9c9c"/><path d="M2 4.500h5" stroke="#3a4ea8" stroke-width="1.200"/><path d="M4.500 2v5" stroke="#3a4ea8" stroke-width="1.200"/></svg>
<i class="hd" style="left:65px;top:190px;width:2px"></i>
<svg style="left:67px;top:182px" width="16" height="14" viewBox="0 0 16 14"><path d="M.8 0h5.100c.5 0 .8.200 1.100.600l.9 1.400h7.300c.5 0 .8.300.8.800v10.400c0 .5-.3.800-.8.800H.8c-.5 0-.8-.3-.8-.8V.8C0 .3.300 0 .8 0z" fill="#fec22b"/></svg>
<span class="t" style="left:87.46px;top:183px;font-size:12px;color:#d4d4d4;transform-origin:0 10px;transform:scaleX(0.9783)">FabFilter</span>
<svg style="left:55px;top:204px" width="9" height="9" viewBox="0 0 9 9"><defs><linearGradient id="eg" x1="0" y1="0" x2="1" y2="1"><stop offset="0" stop-color="#fff"/><stop offset="1" stop-color="#d4d4d4"/></linearGradient></defs><rect x=".5" y=".5" width="8" height="8" rx=".8" fill="url(#eg)" stroke="#9c9c9c"/><path d="M2 4.500h5" stroke="#3a4ea8" stroke-width="1.200"/><path d="M4.500 2v5" stroke="#3a4ea8" stroke-width="1.200"/></svg>
<i class="hd" style="left:65px;top:208px;width:2px"></i>
<svg style="left:67px;top:200px" width="16" height="14" viewBox="0 0 16 14"><path d="M.8 0h5.100c.5 0 .8.200 1.100.600l.9 1.400h7.300c.5 0 .8.300.8.800v10.400c0 .5-.3.800-.8.800H.8c-.5 0-.8-.3-.8-.8V.8C0 .3.300 0 .8 0z" fill="#fec22b"/></svg>
<span class="t" style="left:87.72px;top:201px;font-size:12px;color:#d4d4d4;transform-origin:0 10px;transform:scaleX(1.0085)">Gigabyte</span>
<svg style="left:55px;top:222px" width="9" height="9" viewBox="0 0 9 9"><defs><linearGradient id="eg" x1="0" y1="0" x2="1" y2="1"><stop offset="0" stop-color="#fff"/><stop offset="1" stop-color="#d4d4d4"/></linearGradient></defs><rect x=".5" y=".5" width="8" height="8" rx=".8" fill="url(#eg)" stroke="#9c9c9c"/><path d="M2 4.500h5" stroke="#3a4ea8" stroke-width="1.200"/><path d="M4.500 2v5" stroke="#3a4ea8" stroke-width="1.200"/></svg>
<i class="hd" style="left:65px;top:226px;width:2px"></i>
<svg style="left:67px;top:218px" width="16" height="14" viewBox="0 0 16 14"><path d="M.8 0h5.100c.5 0 .8.200 1.100.600l.9 1.400h7.300c.5 0 .8.300.8.800v10.400c0 .5-.3.800-.8.800H.8c-.5 0-.8-.3-.8-.8V.8C0 .3.300 0 .8 0z" fill="#fec22b"/></svg>
<span class="t" style="left:87.73px;top:219px;font-size:12px;color:#d4d4d4;transform-origin:0 10px;transform:scaleX(0.9858)">GOG.com</span>
<svg style="left:55px;top:240px" width="9" height="9" viewBox="0 0 9 9"><defs><linearGradient id="eg" x1="0" y1="0" x2="1" y2="1"><stop offset="0" stop-color="#fff"/><stop offset="1" stop-color="#d4d4d4"/></linearGradient></defs><rect x=".5" y=".5" width="8" height="8" rx=".8" fill="url(#eg)" stroke="#9c9c9c"/><path d="M2 4.500h5" stroke="#3a4ea8" stroke-width="1.200"/><path d="M4.500 2v5" stroke="#3a4ea8" stroke-width="1.200"/></svg>
<i class="hd" style="left:65px;top:244px;width:2px"></i>
<svg style="left:67px;top:236px" width="16" height="14" viewBox="0 0 16 14"><path d="M.8 0h5.100c.5 0 .8.200 1.100.600l.9 1.400h7.300c.5 0 .8.300.8.800v10.400c0 .5-.3.800-.8.800H.8c-.5 0-.8-.3-.8-.8V.8C0 .3.300 0 .8 0z" fill="#fec22b"/></svg>
<span class="t" style="left:87.72px;top:237px;font-size:12px;color:#d4d4d4;transform-origin:0 10px;transform:scaleX(1.0066)">Google</span>
<svg style="left:55px;top:258px" width="9" height="9" viewBox="0 0 9 9"><defs><linearGradient id="eg" x1="0" y1="0" x2="1" y2="1"><stop offset="0" stop-color="#fff"/><stop offset="1" stop-color="#d4d4d4"/></linearGradient></defs><rect x=".5" y=".5" width="8" height="8" rx=".8" fill="url(#eg)" stroke="#9c9c9c"/><path d="M2 4.500h5" stroke="#3a4ea8" stroke-width="1.200"/><path d="M4.500 2v5" stroke="#3a4ea8" stroke-width="1.200"/></svg>
<i class="hd" style="left:65px;top:262px;width:2px"></i>
<svg style="left:67px;top:254px" width="16" height="14" viewBox="0 0 16 14"><path d="M.8 0h5.100c.5 0 .8.200 1.100.600l.9 1.400h7.300c.5 0 .8.300.8.800v10.400c0 .5-.3.800-.8.800H.8c-.5 0-.8-.3-.8-.8V.8C0 .3.300 0 .8 0z" fill="#fec22b"/></svg>
<span class="t" style="left:87.45px;top:255px;font-size:12px;color:#d4d4d4;transform-origin:0 10px;transform:scaleX(0.9920)">HD Sentinel</span>
<svg style="left:55px;top:276px" width="9" height="9" viewBox="0 0 9 9"><defs><linearGradient id="eg" x1="0" y1="0" x2="1" y2="1"><stop offset="0" stop-color="#fff"/><stop offset="1" stop-color="#d4d4d4"/></linearGradient></defs><rect x=".5" y=".5" width="8" height="8" rx=".8" fill="url(#eg)" stroke="#9c9c9c"/><path d="M2 4.500h5" stroke="#3a4ea8" stroke-width="1.200"/><path d="M4.500 2v5" stroke="#3a4ea8" stroke-width="1.200"/></svg>
<i class="hd" style="left:65px;top:280px;width:2px"></i>
<svg style="left:67px;top:272px" width="16" height="14" viewBox="0 0 16 14"><path d="M.8 0h5.100c.5 0 .8.200 1.100.600l.9 1.400h7.300c.5 0 .8.300.8.800v10.400c0 .5-.3.800-.8.800H.8c-.5 0-.8-.3-.8-.8V.8C0 .3.300 0 .8 0z" fill="#fec22b"/></svg>
<span class="t" style="left:87.44px;top:273px;font-size:12px;color:#d4d4d4;transform-origin:0 10px;transform:scaleX(1.0264)">Image-Line</span>
<svg style="left:55px;top:294px" width="9" height="9" viewBox="0 0 9 9"><defs><linearGradient id="eg" x1="0" y1="0" x2="1" y2="1"><stop offset="0" stop-color="#fff"/><stop offset="1" stop-color="#d4d4d4"/></linearGradient></defs><rect x=".5" y=".5" width="8" height="8" rx=".8" fill="url(#eg)" stroke="#9c9c9c"/><path d="M2 4.500h5" stroke="#3a4ea8" stroke-width="1.200"/><path d="M4.500 2v5" stroke="#3a4ea8" stroke-width="1.200"/></svg>
<i class="hd" style="left:65px;top:298px;width:2px"></i>
<svg style="left:67px;top:290px" width="16" height="14" viewBox="0 0 16 14"><path d="M.8 0h5.100c.5 0 .8.200 1.100.600l.9 1.400h7.300c.5 0 .8.300.8.800v10.400c0 .5-.3.800-.8.800H.8c-.5 0-.8-.3-.8-.8V.8C0 .3.300 0 .8 0z" fill="#fec22b"/></svg>
<span class="t" style="left:87.40px;top:291px;font-size:12px;color:#d4d4d4;transform-origin:0 10px;transform:scaleX(1.0952)">Intel</span>
<svg style="left:55px;top:312px" width="9" height="9" viewBox="0 0 9 9"><defs><linearGradient id="eg" x1="0" y1="0" x2="1" y2="1"><stop offset="0" stop-color="#fff"/><stop offset="1" stop-color="#d4d4d4"/></linearGradient></defs><rect x=".5" y=".5" width="8" height="8" rx=".8" fill="url(#eg)" stroke="#9c9c9c"/><path d="M2 4.500h5" stroke="#3a4ea8" stroke-width="1.200"/><path d="M4.500 2v5" stroke="#3a4ea8" stroke-width="1.200"/></svg>
<i class="hd" style="left:65px;top:316px;width:2px"></i>
<svg style="left:67px;top:308px" width="16" height="14" viewBox="0 0 16 14"><path d="M.8 0h5.100c.5 0 .8.200 1.100.600l.9 1.400h7.300c.5 0 .8.300.8.800v10.400c0 .5-.3.800-.8.800H.8c-.5 0-.8-.3-.8-.8V.8C0 .3.300 0 .8 0z" fill="#fec22b"/></svg>
<span class="t" style="left:87.48px;top:309px;font-size:12px;color:#d4d4d4;transform-origin:0 10px;transform:scaleX(0.9472)">KasperskyLab</span>
<i class="hd" style="left:61px;top:334px;width:6px"></i>
<svg style="left:67px;top:326px" width="16" height="14" viewBox="0 0 16 14"><path d="M.8 0h5.100c.5 0 .8.200 1.100.600l.9 1.400h7.300c.5 0 .8.300.8.800v10.400c0 .5-.3.800-.8.800H.8c-.5 0-.8-.3-.8-.8V.8C0 .3.300 0 .8 0z" fill="#fec22b"/></svg>
<span class="t" style="left:87.45px;top:327px;font-size:12px;color:#d4d4d4;transform-origin:0 10px;transform:scaleX(0.9931)">Kazrog</span>
<svg style="left:55px;top:348px" width="9" height="9" viewBox="0 0 9 9"><defs><linearGradient id="eg" x1="0" y1="0" x2="1" y2="1"><stop offset="0" stop-color="#fff"/><stop offset="1" stop-color="#d4d4d4"/></linearGradient></defs><rect x=".5" y=".5" width="8" height="8" rx=".8" fill="url(#eg)" stroke="#9c9c9c"/><path d="M2 4.500h5" stroke="#3a4ea8" stroke-width="1.200"/><path d="M4.500 2v5" stroke="#3a4ea8" stroke-width="1.200"/></svg>
<i class="hd" style="left:65px;top:352px;width:2px"></i>
<svg style="left:67px;top:344px" width="16" height="14" viewBox="0 0 16 14"><path d="M.8 0h5.100c.5 0 .8.200 1.100.600l.9 1.400h7.300c.5 0 .8.300.8.800v10.400c0 .5-.3.800-.8.800H.8c-.5 0-.8-.3-.8-.8V.8C0 .3.300 0 .8 0z" fill="#fec22b"/></svg>
<span class="t" style="left:87.47px;top:345px;font-size:12px;color:#d4d4d4;transform-origin:0 10px;transform:scaleX(0.9565)">Licenses</span>
<i class="hd" style="left:61px;top:370px;width:6px"></i>
<svg style="left:67px;top:362px" width="16" height="14" viewBox="0 0 16 14"><path d="M.8 0h5.100c.5 0 .8.200 1.100.600l.9 1.400h7.300c.5 0 .8.300.8.800v10.400c0 .5-.3.800-.8.800H.8c-.5 0-.8-.3-.8-.8V.8C0 .3.300 0 .8 0z" fill="#fec22b"/></svg>
<span class="t" style="left:87.46px;top:363px;font-size:12px;color:#d4d4d4;transform-origin:0 10px;transform:scaleX(0.9825)">LinkShellExtension</span>
<svg style="left:55px;top:384px" width="9" height="9" viewBox="0 0 9 9"><defs><linearGradient id="eg" x1="0" y1="0" x2="1" y2="1"><stop offset="0" stop-color="#fff"/><stop offset="1" stop-color="#d4d4d4"/></linearGradient></defs><rect x=".5" y=".5" width="8" height="8" rx=".8" fill="url(#eg)" stroke="#9c9c9c"/><path d="M2 4.500h5" stroke="#3a4ea8" stroke-width="1.200"/><path d="M4.500 2v5" stroke="#3a4ea8" stroke-width="1.200"/></svg>
<i class="hd" style="left:65px;top:388px;width:2px"></i>
<svg style="left:67px;top:380px" width="16" height="14" viewBox="0 0 16 14"><path d="M.8 0h5.100c.5 0 .8.200 1.100.600l.9 1.400h7.300c.5 0 .8.300.8.800v10.400c0 .5-.3.800-.8.800H.8c-.5 0-.8-.3-.8-.8V.8C0 .3.300 0 .8 0z" fill="#fec22b"/></svg>
<span class="t" style="left:87.43px;top:381px;font-size:12px;color:#d4d4d4;transform-origin:0 10px;transform:scaleX(1.0308)">Macromedia</span>
<svg style="left:55px;top:402px" width="9" height="9" viewBox="0 0 9 9"><defs><linearGradient id="eg" x1="0" y1="0" x2="1" y2="1"><stop offset="0" stop-color="#fff"/><stop offset="1" stop-color="#d4d4d4"/></linearGradient></defs><rect x=".5" y=".5" width="8" height="8" rx=".8" fill="url(#eg)" stroke="#9c9c9c"/><path d="M2 4.500h5" stroke="#3a4ea8" stroke-width="1.200"/><path d="M4.500 2v5" stroke="#3a4ea8" stroke-width="1.200"/></svg>
<i class="hd" style="left:65px;top:406px;width:2px"></i>
<svg style="left:67px;top:398px" width="16" height="14" viewBox="0 0 16 14"><path d="M.8 0h5.100c.5 0 .8.200 1.100.600l.9 1.400h7.300c.5 0 .8.300.8.800v10.400c0 .5-.3.800-.8.800H.8c-.5 0-.8-.3-.8-.8V.8C0 .3.300 0 .8 0z" fill="#fec22b"/></svg>
<span class="t" style="left:87.41px;top:399px;font-size:12px;color:#d4d4d4;transform-origin:0 10px;transform:scaleX(1.0695)">Microsoft</span>
<svg style="left:55px;top:420px" width="9" height="9" viewBox="0 0 9 9"><defs><linearGradient id="eg" x1="0" y1="0" x2="1" y2="1"><stop offset="0" stop-color="#fff"/><stop offset="1" stop-color="#d4d4d4"/></linearGradient></defs><rect x=".5" y=".5" width="8" height="8" rx=".8" fill="url(#eg)" stroke="#9c9c9c"/><path d="M2 4.500h5" stroke="#3a4ea8" stroke-width="1.200"/><path d="M4.500 2v5" stroke="#3a4ea8" stroke-width="1.200"/></svg>
<i class="hd" style="left:65px;top:424px;width:2px"></i>
<svg style="left:67px;top:416px" width="16" height="14" viewBox="0 0 16 14"><path d="M.8 0h5.100c.5 0 .8.200 1.100.600l.9 1.400h7.300c.5 0 .8.300.8.800v10.400c0 .5-.3.800-.8.800H.8c-.5 0-.8-.3-.8-.8V.8C0 .3.300 0 .8 0z" fill="#fec22b"/></svg>
<span class="t" style="left:87.43px;top:417px;font-size:12px;color:#d4d4d4;transform-origin:0 10px;transform:scaleX(1.0281)">MimarSinan</span>
<svg style="left:55px;top:438px" width="9" height="9" viewBox="0 0 9 9"><defs><linearGradient id="eg" x1="0" y1="0" x2="1" y2="1"><stop offset="0" stop-color="#fff"/><stop offset="1" stop-color="#d4d4d4"/></linearGradient></defs><rect x=".5" y=".5" width="8" height="8" rx=".8" fill="url(#eg)" stroke="#9c9c9c"/><path d="M2 4.500h5" stroke="#3a4ea8" stroke-width="1.200"/><path d="M4.500 2v5" stroke="#3a4ea8" stroke-width="1.200"/></svg>
<i class="hd" style="left:65px;top:442px;width:2px"></i>
<svg style="left:67px;top:434px" width="16" height="14" viewBox="0 0 16 14"><path d="M.8 0h5.100c.5 0 .8.200 1.100.600l.9 1.400h7.300c.5 0 .8.300.8.800v10.400c0 .5-.3.800-.8.800H.8c-.5 0-.8-.3-.8-.8V.8C0 .3.300 0 .8 0z" fill="#fec22b"/></svg>
<span class="t" style="left:87.43px;top:435px;font-size:12px;color:#d4d4d4;transform-origin:0 10px;transform:scaleX(1.0411)">Mozilla</span>
<svg style="left:55px;top:456px" width="9" height="9" viewBox="0 0 9 9"><defs><linearGradient id="eg" x1="0" y1="0" x2="1" y2="1"><stop offset="0" stop-color="#fff"/><stop offset="1" stop-color="#d4d4d4"/></linearGradient></defs><rect x=".5" y=".5" width="8" height="8" rx=".8" fill="url(#eg)" stroke="#9c9c9c"/><path d="M2 4.500h5" stroke="#3a4ea8" stroke-width="1.200"/><path d="M4.500 2v5" stroke="#3a4ea8" stroke-width="1.200"/></svg>
<i class="hd" style="left:65px;top:460px;width:2px"></i>
<svg style="left:67px;top:452px" width="16" height="14" viewBox="0 0 16 14"><path d="M.8 0h5.100c.5 0 .8.200 1.100.600l.9 1.400h7.300c.5 0 .8.300.8.800v10.400c0 .5-.3.800-.8.800H.8c-.5 0-.8-.3-.8-.8V.8C0 .3.300 0 .8 0z" fill="#fec22b"/></svg>
<span class="t" style="left:87.44px;top:453px;font-size:12px;color:#d4d4d4;transform-origin:0 10px;transform:scaleX(1.0250)">Nuance</span>
<i class="hd" style="left:61px;top:478px;width:6px"></i>
<svg style="left:67px;top:470px" width="16" height="14" viewBox="0 0 16 14"><path d="M.8 0h5.100c.5 0 .8.200 1.100.600l.9 1.400h7.300c.5 0 .8.300.8.800v10.400c0 .5-.3.800-.8.800H.8c-.5 0-.8-.3-.8-.8V.8C0 .3.300 0 .8 0z" fill="#fec22b"/></svg>
<span class="t" style="left:87.42px;top:471px;font-size:12px;color:#d4d4d4;transform-origin:0 10px;transform:scaleX(1.0528)">Nugen Audio</span>
<svg style="left:55px;top:492px" width="9" height="9" viewBox="0 0 9 9"><defs><linearGradient id="eg" x1="0" y1="0" x2="1" y2="1"><stop offset="0" stop-color="#fff"/><stop offset="1" stop-color="#d4d4d4"/></linearGradient></defs><rect x=".5" y=".5" width="8" height="8" rx=".8" fill="url(#eg)" stroke="#9c9c9c"/><path d="M2 4.500h5" stroke="#3a4ea8" stroke-width="1.200"/><path d="M4.500 2v5" stroke="#3a4ea8" stroke-width="1.200"/></svg>
<i class="hd" style="left:65px;top:496px;width:2px"></i>
<svg style="left:67px;top:488px" width="16" height="14" viewBox="0 0 16 14"><path d="M.8 0h5.100c.5 0 .8.200 1.100.600l.9 1.400h7.300c.5 0 .8.300.8.800v10.400c0 .5-.3.800-.8.800H.8c-.5 0-.8-.3-.8-.8V.8C0 .3.300 0 .8 0z" fill="#fec22b"/></svg>
<span class="t" style="left:87.44px;top:489px;font-size:12px;color:#d4d4d4;transform-origin:0 10px;transform:scaleX(1.0101)">NVIDIA Corporation</span>
<svg style="left:55px;top:510px" width="9" height="9" viewBox="0 0 9 9"><defs><linearGradient id="eg" x1="0" y1="0" x2="1" y2="1"><stop offset="0" stop-color="#fff"/><stop offset="1" stop-color="#d4d4d4"/></linearGradient></defs><rect x=".5" y=".5" width="8" height="8" rx=".8" fill="url(#eg)" stroke="#9c9c9c"/><path d="M2 4.500h5" stroke="#3a4ea8" stroke-width="1.200"/><path d="M4.500 2v5" stroke="#3a4ea8" stroke-width="1.200"/></svg>
<i class="hd" style="left:65px;top:514px;width:2px"></i>
<svg style="left:67px;top:506px" width="16" height="14" viewBox="0 0 16 14"><path d="M.8 0h5.100c.5 0 .8.200 1.100.600l.9 1.400h7.300c.5 0 .8.300.8.800v10.400c0 .5-.3.800-.8.800H.8c-.5 0-.8-.3-.8-.8V.8C0 .3.300 0 .8 0z" fill="#fec22b"/></svg>
<span class="t" style="left:87.74px;top:507px;font-size:12px;color:#d4d4d4;transform-origin:0 10px;transform:scaleX(0.9481)">ODBC</span>
<svg style="left:55px;top:528px" width="9" height="9" viewBox="0 0 9 9"><defs><linearGradient id="eg" x1="0" y1="0" x2="1" y2="1"><stop offset="0" stop-color="#fff"/><stop offset="1" stop-color="#d4d4d4"/></linearGradient></defs><rect x=".5" y=".5" width="8" height="8" rx=".8" fill="url(#eg)" stroke="#9c9c9c"/><path d="M2 4.500h5" stroke="#3a4ea8" stroke-width="1.200"/><path d="M4.500 2v5" stroke="#3a4ea8" stroke-width="1.200"/></svg>
<i class="hd" style="left:65px;top:532px;width:2px"></i>
<svg style="left:67px;top:524px" width="16" height="14" viewBox="0 0 16 14"><path d="M.8 0h5.100c.5 0 .8.200 1.100.600l.9 1.400h7.300c.5 0 .8.300.8.800v10.400c0 .5-.3.800-.8.800H.8c-.5 0-.8-.3-.8-.8V.8C0 .3.300 0 .8 0z" fill="#fec22b"/></svg>
<span class="t" style="left:87.46px;top:525px;font-size:12px;color:#d4d4d4;transform-origin:0 10px;transform:scaleX(0.9839)">Propellerhead Software</span>
<svg style="left:55px;top:546px" width="9" height="9" viewBox="0 0 9 9"><defs><linearGradient id="eg" x1="0" y1="0" x2="1" y2="1"><stop offset="0" stop-color="#fff"/><stop offset="1" stop-color="#d4d4d4"/></linearGradient></defs><rect x=".5" y=".5" width="8" height="8" rx=".8" fill="url(#eg)" stroke="#9c9c9c"/><path d="M2 4.500h5" stroke="#3a4ea8" stroke-width="1.200"/></svg>
<i class="hd" style="left:65px;top:550px;width:2px"></i>
<svg style="left:67px;top:542px" width="16" height="14" viewBox="0 0 16 14"><path d="M.8 0h5.100c.5 0 .8.200 1.100.600l.9 1.400h7.300c.5 0 .8.300.8.800v10.400c0 .5-.3.800-.8.800H.8c-.5 0-.8-.3-.8-.8V.8C0 .3.300 0 .8 0z" fill="#fec22b"/></svg>
<span class="t" style="left:87.47px;top:543px;font-size:12px;color:#d4d4d4;transform-origin:0 10px;transform:scaleX(0.9560)">Realtek</span>
<svg style="left:71px;top:564px" width="9" height="9" viewBox="0 0 9 9"><defs><linearGradient id="eg" x1="0" y1="0" x2="1" y2="1"><stop offset="0" stop-color="#fff"/><stop offset="1" stop-color="#d4d4d4"/></linearGradient></defs><rect x=".5" y=".5" width="8" height="8" rx=".8" fill="url(#eg)" stroke="#9c9c9c"/><path d="M2 4.500h5" stroke="#3a4ea8" stroke-width="1.200"/></svg>
<i class="hd" style="left:81px;top:568px;width:2px"></i>
<svg style="left:83px;top:560px" width="16" height="14" viewBox="0 0 16 14"><path d="M.8 0h5.100c.5 0 .8.200 1.100.600l.9 1.400h7.300c.5 0 .8.300.8.800v10.400c0 .5-.3.800-.8.800H.8c-.5 0-.8-.3-.8-.8V.8C0 .3.300 0 .8 0z" fill="#fec22b"/></svg>
<span class="t" style="left:104.00px;top:561px;font-size:12px;color:#d4d4d4;transform-origin:0 10px;transform:scaleX(1.0413)">Audio</span>
<i class="hd" style="left:93px;top:586px;width:6px"></i>
<svg style="left:99px;top:577.5px" width="17" height="15" viewBox="0 0 17 15"><path d="M.8 .300h5.300c.4 0 .7.200.9.500l.8 1.200h4.500v3H.2V1c0-.4.300-.700.600-.700z" fill="#dca522"/><path d="M.2 3h2v11.800H.9c-.4 0-.7-.3-.7-.7z" fill="#c9951d"/><path d="M2 3.300h13.800c.3 0 .5.200.5.500l-.2 10.500c0 .3-.2.500-.5.500H.9c-.2 0-.3-.2-.3-.4z" fill="#fec22b"/></svg>
<div style="position:absolute;left:118px;top:576px;width:45px;height:18px;background:#f0f0f0;box-shadow:inset 0 0 0 1px #fff"></div>
<span class="t" style="left:119.45px;top:579px;font-size:12px;color:#000;transform-origin:0 10px;transform:scaleX(0.9988)">Installer</span>
<svg style="left:55px;top:600px" width="9" height="9" viewBox="0 0 9 9"><defs><linearGradient id="eg" x1="0" y1="0" x2="1" y2="1"><stop offset="0" stop-color="#fff"/><stop offset="1" stop-color="#d4d4d4"/></linearGradient></defs><rect x=".5" y=".5" width="8" height="8" rx=".8" fill="url(#eg)" stroke="#9c9c9c"/><path d="M2 4.500h5" stroke="#3a4ea8" stroke-width="1.200"/><path d="M4.500 2v5" stroke="#3a4ea8" stroke-width="1.200"/></svg>
<i class="hd" style="left:65px;top:604px;width:2px"></i>
<svg style="left:67px;top:596px" width="16" height="14" viewBox="0 0 16 14"><path d="M.8 0h5.100c.5 0 .8.200 1.100.600l.9 1.400h7.300c.5 0 .8.300.8.800v10.400c0 .5-.3.800-.8.800H.8c-.5 0-.8-.3-.8-.8V.8C0 .3.300 0 .8 0z" fill="#fec22b"/></svg>
<span class="t" style="left:87.45px;top:597px;font-size:12px;color:#d4d4d4;transform-origin:0 10px;transform:scaleX(0.9952)">Realtek Semiconductor Corp.</span>
<svg style="left:55px;top:618px" width="9" height="9" viewBox="0 0 9 9"><defs><linearGradient id="eg" x1="0" y1="0" x2="1" y2="1"><stop offset="0" stop-color="#fff"/><stop offset="1" stop-color="#d4d4d4"/></linearGradient></defs><rect x=".5" y=".5" width="8" height="8" rx=".8" fill="url(#eg)" stroke="#9c9c9c"/><path d="M2 4.500h5" stroke="#3a4ea8" stroke-width="1.200"/><path d="M4.500 2v5" stroke="#3a4ea8" stroke-width="1.200"/></svg>
<i class="hd" style="left:65px;top:622px;width:2px"></i>
<svg style="left:67px;top:614px" width="16" height="14" viewBox="0 0 16 14"><path d="M.8 0h5.100c.5 0 .8.200 1.100.600l.9 1.400h7.300c.5 0 .8.300.8.800v10.400c0 .5-.3.800-.8.800H.8c-.5 0-.8-.3-.8-.8V.8C0 .3.300 0 .8 0z" fill="#fec22b"/></svg>
<span class="t" style="left:87.72px;top:615px;font-size:12px;color:#d4d4d4;transform-origin:0 10px;transform:scaleX(1.0050)">SoftVoice</span>
<svg style="left:55px;top:636px" width="9" height="9" viewBox="0 0 9 9"><defs><linearGradient id="eg" x1="0" y1="0" x2="1" y2="1"><stop offset="0" stop-color="#fff"/><stop offset="1" stop-color="#d4d4d4"/></linearGradient></defs><rect x=".5" y=".5" width="8" height="8" rx=".8" fill="url(#eg)" stroke="#9c9c9c"/><path d="M2 4.500h5" stroke="#3a4ea8" stroke-width="1.200"/><path d="M4.500 2v5" stroke="#3a4ea8" stroke-width="1.200"/></svg>
<i class="hd" style="left:65px;top:640px;width:2px"></i>
<svg style="left:67px;top:632px" width="16" height="14" viewBox="0 0 16 14"><path d="M.8 0h5.100c.5 0 .8.200 1.100.600l.9 1.400h7.300c.5 0 .8.300.8.800v10.400c0 .5-.3.800-.8.800H.8c-.5 0-.8-.3-.8-.8V.8C0 .3.300 0 .8 0z" fill="#fec22b"/></svg>
<span class="t" style="left:87.73px;top:633px;font-size:12px;color:#d4d4d4;transform-origin:0 10px;transform:scaleX(0.9817)">SoliderSound</span>
<svg style="left:55px;top:654px" width="9" height="9" viewBox="0 0 9 9"><defs><linearGradient id="eg" x1="0" y1="0" x2="1" y2="1"><stop offset="0" stop-color="#fff"/><stop offset="1" stop-color="#d4d4d4"/></linearGradient></defs><rect x=".5" y=".5" width="8" height="8" rx=".8" fill="url(#eg)" stroke="#9c9c9c"/><path d="M2 4.500h5" stroke="#3a4ea8" stroke-width="1.200"/><path d="M4.500 2v5" stroke="#3a4ea8" stroke-width="1.200"/></svg>
<i class="hd" style="left:65px;top:658px;width:2px"></i>
<svg style="left:67px;top:650px" width="16" height="14" viewBox="0 0 16 14"><path d="M.8 0h5.100c.5 0 .8.200 1.100.600l.9 1.400h7.300c.5 0 .8.300.8.800v10.400c0 .5-.3.800-.8.800H.8c-.5 0-.8-.3-.8-.8V.8C0 .3.300 0 .8 0z" fill="#fec22b"/></svg>
<span class="t" style="left:87.73px;top:651px;font-size:12px;color:#d4d4d4;transform-origin:0 10px;transform:scaleX(0.9756)">Sonic Charge</span>
<svg style="left:55px;top:672px" width="9" height="9" viewBox="0 0 9 9"><defs><linearGradient id="eg" x1="0" y1="0" x2="1" y2="1"><stop offset="0" stop-color="#fff"/><stop offset="1" stop-color="#d4d4d4"/></linearGradient></defs><rect x=".5" y=".5" width="8" height="8" rx=".8" fill="url(#eg)" stroke="#9c9c9c"/><path d="M2 4.500h5" stroke="#3a4ea8" stroke-width="1.200"/><path d="M4.500 2v5" stroke="#3a4ea8" stroke-width="1.200"/></svg>
<i class="hd" style="left:65px;top:676px;width:2px"></i>
<svg style="left:67px;top:668px" width="16" height="14" viewBox="0 0 16 14"><path d="M.8 0h5.100c.5 0 .8.200 1.100.600l.9 1.400h7.300c.5 0 .8.300.8.800v10.400c0 .5-.3.800-.8.800H.8c-.5 0-.8-.3-.8-.8V.8C0 .3.300 0 .8 0z" fill="#fec22b"/></svg>
<span class="t" style="left:87.73px;top:669px;font-size:12px;color:#d4d4d4;transform-origin:0 10px;transform:scaleX(0.9909)">Sonnox Plugins</span>
<svg style="left:55px;top:690px" width="9" height="9" viewBox="0 0 9 9"><defs><linearGradient id="eg" x1="0" y1="0" x2="1" y2="1"><stop offset="0" stop-color="#fff"/><stop offset="1" stop-color="#d4d4d4"/></linearGradient></defs><rect x=".5" y=".5" width="8" height="8" rx=".8" fill="url(#eg)" stroke="#9c9c9c"/><path d="M2 4.500h5" stroke="#3a4ea8" stroke-width="1.200"/><path d="M4.500 2v5" stroke="#3a4ea8" stroke-width="1.200"/></svg>
<i class="hd" style="left:65px;top:694px;width:2px"></i>
<svg style="left:67px;top:686px" width="16" height="14" viewBox="0 0 16 14"><path d="M.8 0h5.100c.5 0 .8.200 1.100.600l.9 1.400h7.300c.5 0 .8.300.8.800v10.400c0 .5-.3.800-.8.800H.8c-.5 0-.8-.3-.8-.8V.8C0 .3.300 0 .8 0z" fill="#fec22b"/></svg>
<span class="t" style="left:87.76px;top:687px;font-size:12px;color:#d4d4d4;transform-origin:0 10px;transform:scaleX(0.8638)">SRS Labs</span>
<svg style="left:55px;top:708px" width="9" height="9" viewBox="0 0 9 9"><defs><linearGradient id="eg" x1="0" y1="0" x2="1" y2="1"><stop offset="0" stop-color="#fff"/><stop offset="1" stop-color="#d4d4d4"/></linearGradient></defs><rect x=".5" y=".5" width="8" height="8" rx=".8" fill="url(#eg)" stroke="#9c9c9c"/><path d="M2 4.500h5" stroke="#3a4ea8" stroke-width="1.200"/><path d="M4.500 2v5" stroke="#3a4ea8" stroke-width="1.200"/></svg>
<i class="hd" style="left:65px;top:712px;width:2px"></i>
<svg style="left:67px;top:704px" width="16" height="14" viewBox="0 0 16 14"><path d="M.8 0h5.100c.5 0 .8.200 1.100.600l.9 1.400h7.300c.5 0 .8.300.8.800v10.400c0 .5-.3.800-.8.800H.8c-.5 0-.8-.3-.8-.8V.8C0 .3.300 0 .8 0z" fill="#fec22b"/></svg>
<span class="t" style="left:87.59px;top:705px;font-size:12px;color:#d4d4d4;transform-origin:0 10px;transform:scaleX(1.0000)">U-HE</span>
<svg style="left:55px;top:726px" width="9" height="9" viewBox="0 0 9 9"><defs><linearGradient id="eg" x1="0" y1="0" x2="1" y2="1"><stop offset="0" stop-color="#fff"/><stop offset="1" stop-color="#d4d4d4"/></linearGradient></defs><rect x=".5" y=".5" width="8" height="8" rx=".8" fill="url(#eg)" stroke="#9c9c9c"/><path d="M2 4.500h5" stroke="#3a4ea8" stroke-width="1.200"/><path d="M4.500 2v5" stroke="#3a4ea8" stroke-width="1.200"/></svg>
<i class="hd" style="left:65px;top:730px;width:2px"></i>
<svg style="left:67px;top:722px" width="16" height="14" viewBox="0 0 16 14"><path d="M.8 0h5.100c.5 0 .8.200 1.100.600l.9 1.400h7.300c.5 0 .8.300.8.800v10.400c0 .5-.3.800-.8.800H.8c-.5 0-.8-.3-.8-.8V.8C0 .3.300 0 .8 0z" fill="#fec22b"/></svg>
<span class="t" style="left:88.00px;top:723px;font-size:12px;color:#d4d4d4;transform-origin:0 10px;transform:scaleX(1.0196)">Volatile</span>
<svg style="left:55px;top:744px" width="9" height="9" viewBox="0 0 9 9"><defs><linearGradient id="eg" x1="0" y1="0" x2="1" y2="1"><stop offset="0" stop-color="#fff"/><stop offset="1" stop-color="#d4d4d4"/></linearGradient></defs><rect x=".5" y=".5" width="8" height="8" rx=".8" fill="url(#eg)" stroke="#9c9c9c"/><path d="M2 4.500h5" stroke="#3a4ea8" stroke-width="1.200"/><path d="M4.500 2v5" stroke="#3a4ea8" stroke-width="1.200"/></svg>
<i class="hd" style="left:65px;top:748px;width:2px"></i>
<svg style="left:67px;top:740px" width="16" height="14" viewBox="0 0 16 14"><path d="M.8 0h5.100c.5 0 .8.200 1.100.600l.9 1.400h7.300c.5 0 .8.300.8.800v10.400c0 .5-.3.800-.8.800H.8c-.5 0-.8-.3-.8-.8V.8C0 .3.300 0 .8 0z" fill="#fec22b"/></svg>
<span class="t" style="left:88.00px;top:741px;font-size:12px;color:#d4d4d4;transform-origin:0 10px;transform:scaleX(0.9815)">Wave Arts</span>
<i class="hd" style="left:61px;top:766px;width:6px"></i>
<svg style="left:67px;top:758px" width="16" height="14" viewBox="0 0 16 14"><path d="M.8 0h5.100c.5 0 .8.200 1.100.600l.9 1.400h7.300c.5 0 .8.300.8.800v10.400c0 .5-.3.800-.8.800H.8c-.5 0-.8-.3-.8-.8V.8C0 .3.300 0 .8 0z" fill="#fec22b"/></svg>
<span class="t" style="left:88.00px;top:759px;font-size:12px;color:#d4d4d4;transform-origin:0 10px;transform:scaleX(0.9306)">Waves</span>
<svg style="left:55px;top:780px" width="9" height="9" viewBox="0 0 9 9"><defs><linearGradient id="eg" x1="0" y1="0" x2="1" y2="1"><stop offset="0" stop-color="#fff"/><stop offset="1" stop-color="#d4d4d4"/></linearGradient></defs><rect x=".5" y=".5" width="8" height="8" rx=".8" fill="url(#eg)" stroke="#9c9c9c"/><path d="M2 4.500h5" stroke="#3a4ea8" stroke-width="1.200"/><path d="M4.500 2v5" stroke="#3a4ea8" stroke-width="1.200"/></svg>
<i class="hd" style="left:65px;top:784px;width:2px"></i>
<svg style="left:67px;top:776px" width="16" height="14" viewBox="0 0 16 14"><path d="M.8 0h5.100c.5 0 .8.200 1.100.600l.9 1.400h7.300c.5 0 .8.300.8.800v10.400c0 .5-.3.800-.8.800H.8c-.5 0-.8-.3-.8-.8V.8C0 .3.300 0 .8 0z" fill="#fec22b"/></svg>
<span class="t" style="left:88.00px;top:777px;font-size:12px;color:#d4d4d4;transform-origin:0 10px;transform:scaleX(0.9655)">WOW6432Node</span>
<svg style="left:55px;top:798px" width="9" height="9" viewBox="0 0 9 9"><defs><linearGradient id="eg" x1="0" y1="0" x2="1" y2="1"><stop offset="0" stop-color="#fff"/><stop offset="1" stop-color="#d4d4d4"/></linearGradient></defs><rect x=".5" y=".5" width="8" height="8" rx=".8" fill="url(#eg)" stroke="#9c9c9c"/><path d="M2 4.500h5" stroke="#3a4ea8" stroke-width="1.200"/><path d="M4.500 2v5" stroke="#3a4ea8" stroke-width="1.200"/></svg>
<i class="hd" style="left:65px;top:802px;width:2px"></i>
<svg style="left:67px;top:794px" width="16" height="14" viewBox="0 0 16 14"><path d="M.8 0h5.100c.5 0 .8.200 1.100.600l.9 1.400h7.300c.5 0 .8.300.8.800v10.400c0 .5-.3.800-.8.800H.8c-.5 0-.8-.3-.8-.8V.8C0 .3.300 0 .8 0z" fill="#fec22b"/></svg>
<span class="t" style="left:87.87px;top:795px;font-size:12px;color:#d4d4d4;transform-origin:0 10px;transform:scaleX(0.9509)">XferRecords</span>
<svg style="left:55px;top:816px" width="9" height="9" viewBox="0 0 9 9"><defs><linearGradient id="eg" x1="0" y1="0" x2="1" y2="1"><stop offset="0" stop-color="#fff"/><stop offset="1" stop-color="#d4d4d4"/></linearGradient></defs><rect x=".5" y=".5" width="8" height="8" rx=".8" fill="url(#eg)" stroke="#9c9c9c"/><path d="M2 4.500h5" stroke="#3a4ea8" stroke-width="1.200"/><path d="M4.500 2v5" stroke="#3a4ea8" stroke-width="1.200"/></svg>
<i class="hd" style="left:65px;top:820px;width:2px"></i>
<svg style="left:67px;top:812px" width="16" height="14" viewBox="0 0 16 14"><path d="M.8 0h5.100c.5 0 .8.200 1.100.600l.9 1.400h7.300c.5 0 .8.300.8.800v10.400c0 .5-.3.800-.8.800H.8c-.5 0-.8-.3-.8-.8V.8C0 .3.300 0 .8 0z" fill="#fec22b"/></svg>
<span class="t" style="left:87.87px;top:813px;font-size:12px;color:#d4d4d4;transform-origin:0 10px;transform:scaleX(0.9682)">Yandex</span>
<svg style="left:55px;top:834px" width="9" height="9" viewBox="0 0 9 9"><defs><linearGradient id="eg" x1="0" y1="0" x2="1" y2="1"><stop offset="0" stop-color="#fff"/><stop offset="1" stop-color="#d4d4d4"/></linearGradient></defs><rect x=".5" y=".5" width="8" height="8" rx=".8" fill="url(#eg)" stroke="#9c9c9c"/><path d="M2 4.500h5" stroke="#3a4ea8" stroke-width="1.200"/><path d="M4.500 2v5" stroke="#3a4ea8" stroke-width="1.200"/></svg>
<i class="hd" style="left:65px;top:838px;width:2px"></i>
<svg style="left:67px;top:830px" width="16" height="14" viewBox="0 0 16 14"><path d="M.8 0h5.100c.5 0 .8.200 1.100.600l.9 1.400h7.300c.5 0 .8.300.8.800v10.400c0 .5-.3.800-.8.800H.8c-.5 0-.8-.3-.8-.8V.8C0 .3.300 0 .8 0z" fill="#fec22b"/></svg>
<span class="t" style="left:87.75px;top:831px;font-size:12px;color:#d4d4d4;transform-origin:0 10px;transform:scaleX(0.9048)">Classes</span>
<svg style="left:55px;top:852px" width="9" height="9" viewBox="0 0 9 9"><defs><linearGradient id="eg" x1="0" y1="0" x2="1" y2="1"><stop offset="0" stop-color="#fff"/><stop offset="1" stop-color="#d4d4d4"/></linearGradient></defs><rect x=".5" y=".5" width="8" height="8" rx=".8" fill="url(#eg)" stroke="#9c9c9c"/><path d="M2 4.500h5" stroke="#3a4ea8" stroke-width="1.200"/><path d="M4.500 2v5" stroke="#3a4ea8" stroke-width="1.200"/></svg>
<i class="hd" style="left:65px;top:856px;width:2px"></i>
<svg style="left:67px;top:848px" width="16" height="14" viewBox="0 0 16 14"><path d="M.8 0h5.100c.5 0 .8.200 1.100.600l.9 1.400h7.300c.5 0 .8.300.8.800v10.400c0 .5-.3.800-.8.800H.8c-.5 0-.8-.3-.8-.8V.8C0 .3.300 0 .8 0z" fill="#fec22b"/></svg>
<span class="t" style="left:87.73px;top:849px;font-size:12px;color:#d4d4d4;transform-origin:0 10px;transform:scaleX(1.0000)">Clients</span>
<svg style="left:55px;top:870px" width="9" height="9" viewBox="0 0 9 9"><defs><linearGradient id="eg" x1="0" y1="0" x2="1" y2="1"><stop offset="0" stop-color="#fff"/><stop offset="1" stop-color="#d4d4d4"/></linearGradient></defs><rect x=".5" y=".5" width="8" height="8" rx=".8" fill="url(#eg)" stroke="#9c9c9c"/><path d="M2 4.500h5" stroke="#3a4ea8" stroke-width="1.200"/><path d="M4.500 2v5" stroke="#3a4ea8" stroke-width="1.200"/></svg>
<i class="hd" style="left:65px;top:874px;width:2px"></i>
<svg style="left:67px;top:866px" width="16" height="14" viewBox="0 0 16 14"><path d="M.8 0h5.100c.5 0 .8.200 1.100.600l.9 1.400h7.300c.5 0 .8.300.8.800v10.400c0 .5-.3.800-.8.800H.8c-.5 0-.8-.3-.8-.8V.8C0 .3.300 0 .8 0z" fill="#fec22b"/></svg>
<span class="t" style="left:87.45px;top:867px;font-size:12px;color:#d4d4d4;transform-origin:0 10px;transform:scaleX(0.9925)">Policies</span>
<div style="position:absolute;left:373px;top:503px;width:13px;height:302px;border-radius:4px;background:linear-gradient(90deg,#8a8a8a,#7b7b7b 25%,#7b7b7b 75%,#8a8a8a)"></div>
<svg style="left:375.8px;top:6.2px" width="8" height="4" viewBox="0 0 8 4"><path d="M0 4h8L4 0z" fill="#9a9a9a"/></svg>
<svg style="left:375.8px;top:864px" width="8" height="4" viewBox="0 0 8 4"><path d="M0 0h8L4 4z" fill="#9a9a9a"/></svg></div>
<div style="position:absolute;left:652px;top:175px;width:1255px;height:877px;box-sizing:border-box;border:1px solid #5b5b5b;background:#222;"></div>
<div style="position:absolute;left:654px;top:177px;width:1252px;height:22px;background:linear-gradient(#4c4c4c,#464646 50%,#404040);"></div>
<div style="position:absolute;left:654px;top:199px;width:1252px;height:1px;background:#2a2a2a;"></div>
<div style="position:absolute;left:1064px;top:177px;width:1px;height:22px;background:#2e2e2e;"></div>
<div style="position:absolute;left:1065px;top:177px;width:1px;height:22px;background:#555;"></div>
<div style="position:absolute;left:1683px;top:177px;width:1px;height:22px;background:#2e2e2e;"></div>
<div style="position:absolute;left:1684px;top:177px;width:1px;height:22px;background:#555;"></div>
<div style="position:absolute;left:1889px;top:177px;width:1px;height:22px;background:#2e2e2e;"></div>
<div style="position:absolute;left:1890px;top:177px;width:1px;height:22px;background:#555;"></div>
<span class="t " style="left:659.46px;top:182px;font-size:12px;color:#d2d2d2;transform-origin:0 10px;transform:scaleX(0.9784);">Название параметра</span><span class="t " style="left:1071.73px;top:182px;font-size:12px;color:#d2d2d2;transform-origin:0 10px;transform:scaleX(0.9914);">Значение параметра</span><span class="t " style="left:1689.86px;top:182px;font-size:12px;color:#d2d2d2;transform-origin:0 10px;transform:scaleX(1.0526);">Тип</span>
<div style="position:absolute;left:673px;top:276px;width:1216px;height:19px;background:#0078d7;"></div>
<svg style="left:660.500px;top:201px" width="9" height="17" viewBox="0 0 9 17"><path d="M1 5.500V12.300a3.500 3.500 0 0 0 7 0V3.600a2.400 2.400 0 0 0-4.800 0V11.800a1.150 1.150 0 0 0 2.300 0V5.500" fill="none" stroke="#1e9fd8" stroke-width="1.100" stroke-linecap="round"/></svg>
<span class="t " style="left:674.71px;top:204px;font-size:12px;color:#dcdcdc;transform-origin:0 10px;transform:scaleX(1.0658);">По умолчанию</span><span class="t " style="left:1070.88px;top:204px;font-size:12px;color:#dcdcdc;transform-origin:0 10px;transform:scaleX(1.0228);">(значение по умолчанию не присвоено)</span><span class="t " style="left:1689.05px;top:204px;font-size:12px;color:#dcdcdc;transform-origin:0 10px;transform:scaleX(0.8235);">REG_SZ</span>
<svg style="left:657px;top:220px" width="16" height="16" viewBox="0 0 16 16"><g fill="#2b93f0"><rect x="0" y="0" width="2" height="3"/><rect x="3.5" y="0" width="2" height="3"/><rect x="7" y="0" width="2" height="3"/><rect x="10.5" y="0" width="2" height="3"/><rect x="14" y="0" width="2" height="3"/><path d="M0 2.400h16v12.400a1.200 1.200 0 0 1-1.200 1.200H1.200A1.200 1.200 0 0 1 0 14.800z"/></g><rect x="1" y="4.400" width="14" height="9.300" fill="#ffffff"/><rect x="2" y="12" width="12" height="1" fill="#2b93f0"/><path d="M6.200 5.900h4.800M8.600 5.900v4.800" stroke="#2a2a2a" stroke-width="1" fill="none"/></svg>
<span class="t " style="left:674.79px;top:223px;font-size:12px;color:#dcdcdc;transform-origin:0 10px;transform:scaleX(0.9358);">BUSDrvVersion</span><span class="t " style="left:1070.93px;top:223px;font-size:12px;color:#dcdcdc;transform-origin:0 10px;transform:scaleX(0.8989);">10.0.22621.4391</span><span class="t " style="left:1689.05px;top:223px;font-size:12px;color:#dcdcdc;transform-origin:0 10px;transform:scaleX(0.8235);">REG_SZ</span>
<svg style="left:657px;top:239px" width="16" height="16" viewBox="0 0 16 16"><g fill="#2b93f0"><rect x="0" y="0" width="2" height="3"/><rect x="3.5" y="0" width="2" height="3"/><rect x="7" y="0" width="2" height="3"/><rect x="10.5" y="0" width="2" height="3"/><rect x="14" y="0" width="2" height="3"/><path d="M0 2.400h16v12.400a1.200 1.200 0 0 1-1.200 1.200H1.200A1.200 1.200 0 0 1 0 14.800z"/></g><rect x="1" y="4.400" width="14" height="9.300" fill="#ffffff"/><rect x="2" y="12" width="12" height="1" fill="#2b93f0"/><path d="M6.200 5.900h4.800M8.600 5.900v4.800" stroke="#2a2a2a" stroke-width="1" fill="none"/></svg>
<span class="t " style="left:674.78px;top:242px;font-size:12px;color:#dcdcdc;transform-origin:0 10px;transform:scaleX(0.9444);">HDAPnPID_0</span><span class="t" style="left:1070.95px;top:242px;font-size:12px;color:#dcdcdc;"><span class="s" style="width:58.12px;transform:scaleX(0.9948)">HDAUDIO\</span><span class="s" style="width:58.42px;transform:scaleX(0.9494)">FUNC_01&amp;</span><span class="s" style="width:63.00px;transform:scaleX(0.9079)">VEN_10DE&amp;</span><span class="s" style="width:60.27px;transform:scaleX(0.9169)">DEV_0072&amp;</span><span class="s" style="transform:scaleX(0.8538)">SUBSYS_14623202</span></span><span class="t " style="left:1689.05px;top:242px;font-size:12px;color:#dcdcdc;transform-origin:0 10px;transform:scaleX(0.8235);">REG_SZ</span>
<svg style="left:657px;top:258px" width="16" height="16" viewBox="0 0 16 16"><g fill="#2b93f0"><rect x="0" y="0" width="2" height="3"/><rect x="3.5" y="0" width="2" height="3"/><rect x="7" y="0" width="2" height="3"/><rect x="10.5" y="0" width="2" height="3"/><rect x="14" y="0" width="2" height="3"/><path d="M0 2.400h16v12.400a1.200 1.200 0 0 1-1.200 1.200H1.200A1.200 1.200 0 0 1 0 14.800z"/></g><rect x="1" y="4.400" width="14" height="9.300" fill="#ffffff"/><rect x="2" y="12" width="12" height="1" fill="#2b93f0"/><path d="M6.200 5.900h4.800M8.600 5.900v4.800" stroke="#2a2a2a" stroke-width="1" fill="none"/></svg>
<span class="t " style="left:674.78px;top:261px;font-size:12px;color:#dcdcdc;transform-origin:0 10px;transform:scaleX(0.9375);">HDAPnPID_1</span><span class="t" style="left:1070.95px;top:261px;font-size:12px;color:#dcdcdc;"><span class="s" style="width:58.12px;transform:scaleX(0.9948)">HDAUDIO\</span><span class="s" style="width:58.42px;transform:scaleX(0.9494)">FUNC_01&amp;</span><span class="s" style="width:63.00px;transform:scaleX(0.9079)">VEN_10EC&amp;</span><span class="s" style="width:60.27px;transform:scaleX(0.9169)">DEV_0887&amp;</span><span class="s" style="transform:scaleX(0.8538)">SUBSYS_10438576</span></span><span class="t " style="left:1689.05px;top:261px;font-size:12px;color:#dcdcdc;transform-origin:0 10px;transform:scaleX(0.8235);">REG_SZ</span>
<svg style="left:657px;top:277px" width="16" height="16" viewBox="0 0 16 16"><g fill="#2e8fe8"><rect x="0" y="0" width="2" height="3"/><rect x="3.5" y="0" width="2" height="3"/><rect x="7" y="0" width="2" height="3"/><rect x="10.5" y="0" width="2" height="3"/><rect x="14" y="0" width="2" height="3"/><path d="M0 2.400h16v12.400a1.200 1.200 0 0 1-1.200 1.200H1.200A1.200 1.200 0 0 1 0 14.800z"/></g><rect x="1" y="4.400" width="14" height="9.300" fill="#86b8ea"/><rect x="2" y="12" width="12" height="1" fill="#2e8fe8"/><path d="M6.200 5.900h4.800M8.600 5.900v4.800" stroke="#2c4a6c" stroke-width="1" fill="none"/></svg>
<span class="t " style="left:674.76px;top:280px;font-size:12px;color:#ffffff;transform-origin:0 10px;transform:scaleX(0.9825);">ProgramFilesDir</span><span class="t " style="left:1071.03px;top:280px;font-size:12px;color:#ffffff;transform-origin:0 10px;transform:scaleX(0.9973);">C:\Program Files (x86)\Realtek\Audio\Drivers\Win64</span><span class="t " style="left:1689.05px;top:280px;font-size:12px;color:#ffffff;transform-origin:0 10px;transform:scaleX(0.8235);">REG_SZ</span>
<div style="position:absolute;left:1103px;top:283px;width:451px;height:274px;box-sizing:border-box;border:1px solid #565656;background:#202020;box-shadow:inset -1px -1px 0 #4c4c4c,0 0 0 1px #1e1e1e,2px 2px 4px 1px rgba(0,0,0,.6);"></div>
<div style="position:absolute;left:1112px;top:307px;width:438px;height:1px;background:linear-gradient(90deg,#202020,#323232 12%,#323232 88%,#202020);"></div>
<div style="position:absolute;left:1112px;top:449px;width:438px;height:1px;background:linear-gradient(90deg,#202020,#323232 12%,#323232 88%,#202020);"></div>
<div style="position:absolute;left:1112px;top:501px;width:438px;height:1px;background:linear-gradient(90deg,#202020,#323232 12%,#323232 88%,#202020);"></div>
<span class="t " style="left:1133.75px;top:288px;font-size:12px;color:#d8d8d8;transform-origin:0 10px;transform:scaleX(1.0023);">Изменить параметр</span><span class="t" style="left:1134.03px;top:318px;font-size:12px;color:#d8d8d8;"><span class="s" style="width:162.18px;transform:scaleX(0.9942)">Создать строковый параметр</span> <span class="s" style="transform:scaleX(0.8576)">(<u>R</u>EG_SZ)...</span></span><span class="t" style="left:1134.03px;top:340px;font-size:12px;color:#d8d8d8;"><span class="s" style="width:253.47px;transform:scaleX(0.9984)">Создать <u>3</u>2-битный целочисленный параметр</span> <span class="s" style="transform:scaleX(0.8995)">(REG_DWORD)...</span></span><span class="t" style="left:1134.03px;top:362px;font-size:12px;color:#d8d8d8;"><span class="s" style="width:253.47px;transform:scaleX(0.9984)">Создать <u>6</u>4-битный целочисленный параметр</span> <span class="s" style="transform:scaleX(0.9008)">(REG_QWORD)...</span></span><span class="t" style="left:1134.02px;top:384px;font-size:12px;color:#d8d8d8;"><span class="s" style="width:245.48px;transform:scaleX(1.0004)">Создать расширяемый строковый параметр</span> <span class="s" style="transform:scaleX(0.8797)">(R<u>E</u>G_EXPAND_SZ)...</span></span><span class="t" style="left:1134.03px;top:406px;font-size:12px;color:#d8d8d8;"><span class="s" style="width:157.67px;transform:scaleX(0.9893)">Создать двоичный параметр</span> <span class="s" style="transform:scaleX(0.8976)">(RE<u>G</u>_BINARY)...</span></span><span class="t" style="left:1134.02px;top:428px;font-size:12px;color:#d8d8d8;"><span class="s" style="width:196.57px;transform:scaleX(1.0061)">Создать многостроковый параметр</span> <span class="s" style="transform:scaleX(0.8868)">(REG_<u>M</u>ULTI_SZ)...</span></span><span class="t " style="left:1134.16px;top:459px;font-size:12px;color:#d8d8d8;transform-origin:0 10px;transform:scaleX(0.9818);">Удалить параметр</span><span class="t " style="left:1133.75px;top:481px;font-size:12px;color:#d8d8d8;transform-origin:0 10px;transform:scaleX(0.9969);">Переименовать параметр</span><span class="t " style="left:1134.30px;top:512px;font-size:12px;color:#d8d8d8;transform-origin:0 10px;transform:scaleX(0.9893);">Добавить в Избранное (параметр)</span><span class="t " style="left:1133.76px;top:534px;font-size:12px;color:#d8d8d8;transform-origin:0 10px;transform:scaleX(0.9885);">Копировать название параметра</span>
</div>
</body></html>
